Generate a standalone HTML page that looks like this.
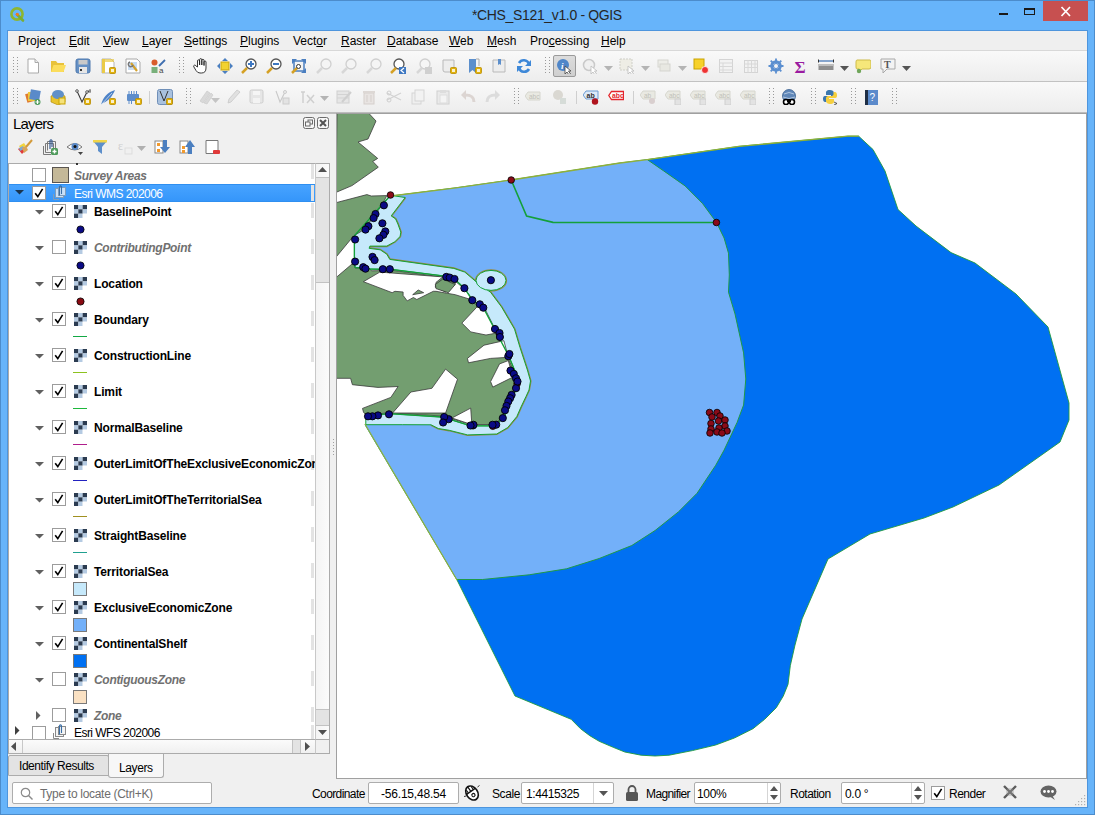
<!DOCTYPE html>
<html><head><meta charset="utf-8"><style>
html,body{margin:0;padding:0;}
body{width:1095px;height:815px;overflow:hidden;position:relative;background:#67B4FA;font-family:"Liberation Sans", sans-serif;}
div{box-sizing:border-box;}
u{text-decoration:underline;text-underline-offset:1px;}
</style></head><body>
<div style="position:absolute;left:0px;top:0px;width:1095px;height:815px;border:1px solid #4C8CCB;"></div><div style="position:absolute;left:7px;top:30px;width:1081px;height:778px;background:#F0F0F0;border:1px solid #4E95DD;"></div><svg style="position:absolute;left:9px;top:6px;" width="18" height="18" viewBox="0 0 18 18"><circle cx="8" cy="8" r="5.6" fill="none" stroke="#8DB631" stroke-width="2.6"/><line x1="8" y1="8.5" x2="14" y2="14.5" stroke="#79AE34" stroke-width="2.6" stroke-linecap="round"/><circle cx="8.3" cy="8.3" r="1.6" fill="#F07D1E"/></svg><div style="position:absolute;left:472px;top:7px;font-size:14px;line-height:17px;color:#262626;white-space:nowrap;letter-spacing:-0.35px;">*CHS_S121_v1.0 - QGIS</div><div style="position:absolute;left:999px;top:13px;width:9px;height:2px;background:#1a1a1a;"></div><div style="position:absolute;left:1024px;top:8px;width:11px;height:7px;border:1px solid #1a1a1a;border-top-width:2px;"></div><div style="position:absolute;left:1043px;top:1px;width:45px;height:20px;background:#C75050;"></div><svg style="position:absolute;left:1060px;top:6px;" width="12" height="11" viewBox="0 0 12 11"><path d="M1.5 1 L10 10 M10 1 L1.5 10" stroke="#fff" stroke-width="1.7"/></svg><div style="position:absolute;left:8px;top:31px;width:1079px;height:19px;background:#EFEFEF;"></div><div style="position:absolute;left:8px;top:50px;width:1079px;height:1px;background:#D8D8D8;"></div><div style="position:absolute;left:18px;top:34px;font-size:12px;line-height:14px;color:#000;white-space:nowrap;">Pro<u>j</u>ect</div><div style="position:absolute;left:69px;top:34px;font-size:12px;line-height:14px;color:#000;white-space:nowrap;"><u>E</u>dit</div><div style="position:absolute;left:103px;top:34px;font-size:12px;line-height:14px;color:#000;white-space:nowrap;"><u>V</u>iew</div><div style="position:absolute;left:142px;top:34px;font-size:12px;line-height:14px;color:#000;white-space:nowrap;"><u>L</u>ayer</div><div style="position:absolute;left:184px;top:34px;font-size:12px;line-height:14px;color:#000;white-space:nowrap;"><u>S</u>ettings</div><div style="position:absolute;left:240px;top:34px;font-size:12px;line-height:14px;color:#000;white-space:nowrap;"><u>P</u>lugins</div><div style="position:absolute;left:293px;top:34px;font-size:12px;line-height:14px;color:#000;white-space:nowrap;">Vect<u>o</u>r</div><div style="position:absolute;left:341px;top:34px;font-size:12px;line-height:14px;color:#000;white-space:nowrap;"><u>R</u>aster</div><div style="position:absolute;left:387px;top:34px;font-size:12px;line-height:14px;color:#000;white-space:nowrap;"><u>D</u>atabase</div><div style="position:absolute;left:449px;top:34px;font-size:12px;line-height:14px;color:#000;white-space:nowrap;"><u>W</u>eb</div><div style="position:absolute;left:487px;top:34px;font-size:12px;line-height:14px;color:#000;white-space:nowrap;"><u>M</u>esh</div><div style="position:absolute;left:530px;top:34px;font-size:12px;line-height:14px;color:#000;white-space:nowrap;">Pro<u>c</u>essing</div><div style="position:absolute;left:601px;top:34px;font-size:12px;line-height:14px;color:#000;white-space:nowrap;"><u>H</u>elp</div><div style="position:absolute;left:8px;top:51px;width:1079px;height:30px;background:linear-gradient(#F9F9F9,#EDEDED);"></div><div style="position:absolute;left:8px;top:81px;width:1079px;height:1px;background:#C2C2C2;"></div><div style="position:absolute;left:8px;top:82px;width:1079px;height:30px;background:linear-gradient(#F9F9F9,#EDEDED);"></div><div style="position:absolute;left:8px;top:112px;width:1079px;height:2px;background:#BDBDBD;"></div><svg style="position:absolute;left:13px;top:57px;" width="5" height="18" viewBox="0 0 5 18"><rect x="0" y="0" width="1" height="1" fill="#9A9A9A"/><rect x="4" y="0" width="1" height="1" fill="#9A9A9A"/><rect x="0" y="3" width="1" height="1" fill="#9A9A9A"/><rect x="4" y="3" width="1" height="1" fill="#9A9A9A"/><rect x="0" y="6" width="1" height="1" fill="#9A9A9A"/><rect x="4" y="6" width="1" height="1" fill="#9A9A9A"/><rect x="0" y="9" width="1" height="1" fill="#9A9A9A"/><rect x="4" y="9" width="1" height="1" fill="#9A9A9A"/><rect x="0" y="12" width="1" height="1" fill="#9A9A9A"/><rect x="4" y="12" width="1" height="1" fill="#9A9A9A"/><rect x="0" y="15" width="1" height="1" fill="#9A9A9A"/><rect x="4" y="15" width="1" height="1" fill="#9A9A9A"/></svg><svg style="position:absolute;left:25px;top:58px;" width="16" height="16" viewBox="0 0 16 16"><path d="M3 1 H10 L13.5 4.5 V15 H3 Z" fill="#fff" stroke="#A9A9A9"/><path d="M10 1 V4.5 H13.5" fill="#eee" stroke="#A9A9A9"/></svg><svg style="position:absolute;left:50px;top:58px;" width="16" height="16" viewBox="0 0 16 16"><path d="M1 3 H6 L7.5 5 H14 V14 H1 Z" fill="#E8C23A"/><path d="M1 14 L3.5 7 H16 L13.5 14 Z" fill="#FBDD5C"/></svg><svg style="position:absolute;left:75px;top:58px;" width="16" height="16" viewBox="0 0 16 16"><rect x="1" y="1" width="14" height="14" rx="2" fill="#6590C4" stroke="#4E79AE"/><rect x="3.5" y="2" width="9" height="4.5" fill="#C9C9C9"/><rect x="4" y="9" width="8" height="6" fill="#E6E6E6"/><rect x="5" y="11" width="2" height="2" fill="#333"/></svg><svg style="position:absolute;left:100px;top:58px;" width="16" height="16" viewBox="0 0 16 16"><path d="M2 1 H11 L14 4 V15 H2 Z" fill="#fff" stroke="#B5B5B5"/><rect x="2" y="1" width="3" height="14" fill="#EACB47"/><rect x="2" y="1" width="12" height="3" fill="#EACB47" opacity="0.7"/><rect x="9.5" y="9.5" width="6" height="6" rx="1" fill="#E2B20A" stroke="#B88A00" stroke-width="0.8"/><rect x="11" y="11" width="3" height="3" fill="#fff" opacity="0.8"/></svg><svg style="position:absolute;left:125px;top:58px;" width="16" height="16" viewBox="0 0 16 16"><path d="M1 1 H12 L15 4 V15 H1 Z" fill="#fff" stroke="#A9A9A9"/><rect x="3" y="4" width="9" height="8" fill="#C8DCF2"/><path d="M6 5 L12 13" stroke="#D4A22D" stroke-width="2.2"/><path d="M5 4 A2.4 2.4 0 1 0 8 7" fill="none" stroke="#777" stroke-width="1.5"/></svg><svg style="position:absolute;left:150px;top:58px;" width="16" height="16" viewBox="0 0 16 16"><circle cx="4.5" cy="4.5" r="3" fill="#D95C2B"/><rect x="1.5" y="9" width="6" height="6" fill="#79B07A"/><path d="M9 8 L15 2" stroke="#3F6FB0" stroke-width="1.8"/><text x="9" y="15" font-size="8" font-family="Liberation Sans" fill="#444">a</text></svg><svg style="position:absolute;left:179px;top:57px;" width="5" height="18" viewBox="0 0 5 18"><rect x="0" y="0" width="1" height="1" fill="#9A9A9A"/><rect x="4" y="0" width="1" height="1" fill="#9A9A9A"/><rect x="0" y="3" width="1" height="1" fill="#9A9A9A"/><rect x="4" y="3" width="1" height="1" fill="#9A9A9A"/><rect x="0" y="6" width="1" height="1" fill="#9A9A9A"/><rect x="4" y="6" width="1" height="1" fill="#9A9A9A"/><rect x="0" y="9" width="1" height="1" fill="#9A9A9A"/><rect x="4" y="9" width="1" height="1" fill="#9A9A9A"/><rect x="0" y="12" width="1" height="1" fill="#9A9A9A"/><rect x="4" y="12" width="1" height="1" fill="#9A9A9A"/><rect x="0" y="15" width="1" height="1" fill="#9A9A9A"/><rect x="4" y="15" width="1" height="1" fill="#9A9A9A"/></svg><svg style="position:absolute;left:192px;top:58px;" width="16" height="16" viewBox="0 0 16 16"><path d="M5.5 9 V3 Q5.5 1.8 6.6 1.8 Q7.6 1.8 7.6 3 V7 V1.8 Q7.6 0.6 8.7 0.6 Q9.8 0.6 9.8 1.8 V7 V2.5 Q9.8 1.3 10.9 1.3 Q12 1.3 12 2.5 V7.5 V4 Q12 3 13 3 Q14 3 14 4 V10 Q14 15 9.5 15 H8 Q5.5 15 4 12.5 L1.8 8.8 Q1.2 7.6 2.3 7.2 Q3.3 6.9 4 8 Z" fill="#fff" stroke="#222" stroke-width="0.9"/></svg><svg style="position:absolute;left:217px;top:58px;" width="16" height="16" viewBox="0 0 16 16"><rect x="4" y="4" width="8" height="8" fill="#F2D230" stroke="#C7A510"/><path d="M8 0 L11 3 H5 Z M8 16 L5 13 H11 Z M0 8 L3 5 V11 Z M16 8 L13 11 V5 Z" fill="#4B7FC0"/></svg><svg style="position:absolute;left:241px;top:58px;" width="16" height="16" viewBox="0 0 16 16"><circle cx="10" cy="6" r="5" fill="#fff" stroke="#555" stroke-width="1.3"/><path d="M7 6 H13 M10 3 V9" stroke="#3E78C2" stroke-width="2"/><path d="M1 15 L6 10" stroke="#D5A125" stroke-width="2.5"/></svg><svg style="position:absolute;left:266px;top:58px;" width="16" height="16" viewBox="0 0 16 16"><circle cx="10" cy="6" r="5" fill="#fff" stroke="#555" stroke-width="1.3"/><path d="M7 6 H13" stroke="#3E78C2" stroke-width="2"/><path d="M1 15 L6 10" stroke="#D5A125" stroke-width="2.5"/></svg><svg style="position:absolute;left:291px;top:58px;" width="16" height="16" viewBox="0 0 16 16"><path d="M1 1 H6 L1 6 Z M15 1 H10 L15 6 Z M15 15 H10 L15 10 Z" fill="#4B7FC0"/><rect x="3" y="3" width="10" height="10" fill="none" stroke="#4B7FC0" stroke-width="1.5"/><path d="M1 15 L6 10" stroke="#D5A125" stroke-width="2.5"/><circle cx="7.5" cy="8.5" r="2" fill="#fff" stroke="#333"/></svg><svg style="position:absolute;left:316px;top:58px;" width="16" height="16" viewBox="0 0 16 16"><circle cx="10" cy="6" r="5" fill="#F4F4F4" stroke="#CFCFCF" stroke-width="1.3"/><path d="M1 15 L6 10" stroke="#D7D7D7" stroke-width="2.5"/></svg><svg style="position:absolute;left:341px;top:58px;" width="16" height="16" viewBox="0 0 16 16"><circle cx="10" cy="6" r="5" fill="#F4F4F4" stroke="#CFCFCF" stroke-width="1.3"/><path d="M1 15 L6 10" stroke="#D7D7D7" stroke-width="2.5"/></svg><svg style="position:absolute;left:366px;top:58px;" width="16" height="16" viewBox="0 0 16 16"><circle cx="10" cy="6" r="5" fill="#F4F4F4" stroke="#CFCFCF" stroke-width="1.3"/><path d="M1 15 L6 10" stroke="#D7D7D7" stroke-width="2.5"/></svg><svg style="position:absolute;left:390px;top:58px;" width="16" height="16" viewBox="0 0 16 16"><circle cx="9" cy="6" r="5" fill="#fff" stroke="#555" stroke-width="1.3"/><path d="M1 15 L6 10" stroke="#D5A125" stroke-width="2.5"/><rect x="9" y="9" width="7" height="7" fill="#3E78C2"/><path d="M14 10 L11 12.5 L14 15" stroke="#fff" fill="none" stroke-width="1.2"/></svg><svg style="position:absolute;left:416px;top:58px;" width="16" height="16" viewBox="0 0 16 16"><circle cx="9" cy="6" r="5" fill="#F6F6F6" stroke="#CFCFCF" stroke-width="1.3"/><path d="M1 15 L6 10" stroke="#D7D7D7" stroke-width="2.5"/><rect x="9" y="9" width="7" height="7" fill="#D0D0D0"/></svg><svg style="position:absolute;left:441px;top:58px;" width="16" height="16" viewBox="0 0 16 16"><path d="M2 2 H13 V14 H4 A2 2 0 0 1 2 12 Z" fill="#EDEDED" stroke="#B9B9B9"/><rect x="9.5" y="9.5" width="6" height="6" rx="1" fill="#E2B20A" stroke="#B88A00" stroke-width="0.8"/><rect x="11" y="11" width="3" height="3" fill="#fff" opacity="0.8"/></svg><svg style="position:absolute;left:466px;top:58px;" width="16" height="16" viewBox="0 0 16 16"><path d="M3 1 H10 V15 L6.5 12 L3 15 Z" fill="#5C8FCC"/><path d="M10 1 H13 V8" fill="none" stroke="#AAA"/><rect x="9.5" y="9.5" width="6" height="6" rx="1" fill="#E2B20A" stroke="#B88A00" stroke-width="0.8"/><rect x="11" y="11" width="3" height="3" fill="#fff" opacity="0.8"/></svg><svg style="position:absolute;left:491px;top:58px;" width="16" height="16" viewBox="0 0 16 16"><path d="M2 2 H14 V14 H2 Z" fill="#EDEDED" stroke="#B9B9B9"/><path d="M7 1 H10 V7 L8.5 6 L7 7 Z" fill="#5C8FCC"/></svg><svg style="position:absolute;left:516px;top:58px;" width="16" height="16" viewBox="0 0 16 16"><path d="M13 6 A5.5 5.5 0 0 0 3 5" fill="none" stroke="#3E88D8" stroke-width="2.6"/><path d="M3 10 A5.5 5.5 0 0 0 13 11" fill="none" stroke="#3E88D8" stroke-width="2.6"/><path d="M15 2 V8 H9 Z M1 14 V8 H7 Z" fill="#3E88D8"/></svg><svg style="position:absolute;left:545px;top:57px;" width="5" height="18" viewBox="0 0 5 18"><rect x="0" y="0" width="1" height="1" fill="#9A9A9A"/><rect x="4" y="0" width="1" height="1" fill="#9A9A9A"/><rect x="0" y="3" width="1" height="1" fill="#9A9A9A"/><rect x="4" y="3" width="1" height="1" fill="#9A9A9A"/><rect x="0" y="6" width="1" height="1" fill="#9A9A9A"/><rect x="4" y="6" width="1" height="1" fill="#9A9A9A"/><rect x="0" y="9" width="1" height="1" fill="#9A9A9A"/><rect x="4" y="9" width="1" height="1" fill="#9A9A9A"/><rect x="0" y="12" width="1" height="1" fill="#9A9A9A"/><rect x="4" y="12" width="1" height="1" fill="#9A9A9A"/><rect x="0" y="15" width="1" height="1" fill="#9A9A9A"/><rect x="4" y="15" width="1" height="1" fill="#9A9A9A"/></svg><div style="position:absolute;left:553px;top:55px;width:23px;height:22px;background:linear-gradient(#DCDCDC,#CFCFCF);border:1px solid #9A9A9A;border-radius:2px;"></div><svg style="position:absolute;left:556px;top:58px;" width="16" height="16" viewBox="0 0 16 16"><circle cx="7" cy="7" r="6" fill="#4F86C9"/><text x="5" y="11" font-size="9" font-weight="bold" font-style="italic" font-family="Liberation Serif" fill="#fff">i</text><path d="M9 8 L9 16 L11 14 L13 17 L14.5 16 L12.5 13 L15 13 Z" fill="#fff" stroke="#444" stroke-width="0.8"/></svg><svg style="position:absolute;left:582px;top:58px;" width="16" height="16" viewBox="0 0 16 16"><circle cx="7" cy="7" r="5.5" fill="#F0F0F0" stroke="#CACACA" stroke-width="1.5"/><path d="M9 8 L9 16 L11 14 L13 17 L14.5 16 L12.5 13 L15 13 Z" fill="#fff" stroke="#BBB" stroke-width="0.8"/></svg><svg style="position:absolute;left:619px;top:58px;" width="16" height="16" viewBox="0 0 16 16"><rect x="1" y="1" width="12" height="11" fill="#EEEDE5" stroke="#CFCFC8" stroke-dasharray="2 1"/><path d="M9 8 L9 16 L11 14 L13 17 L14.5 16 L12.5 13 L15 13 Z" fill="#fff" stroke="#BBB" stroke-width="0.8"/></svg><svg style="position:absolute;left:656px;top:58px;" width="16" height="16" viewBox="0 0 16 16"><rect x="2" y="2" width="10" height="7" fill="#EDEDE8" stroke="#D5D5D0"/><rect x="4" y="6" width="10" height="7" fill="#E8E8E2" stroke="#D5D5D0"/></svg><svg style="position:absolute;left:693px;top:58px;" width="16" height="16" viewBox="0 0 16 16"><rect x="1" y="1" width="10" height="10" fill="#F7D12A" stroke="#C9A300"/><circle cx="12" cy="12" r="3.5" fill="#E33" stroke="#fff" stroke-width="0.8"/></svg><svg style="position:absolute;left:718px;top:58px;" width="16" height="16" viewBox="0 0 16 16"><rect x="1.5" y="1.5" width="13" height="13" fill="#F2F2F2" stroke="#D4D4D4"/><path d="M1.5 5 H14.5 M1.5 8.5 H14.5 M1.5 12 H14.5 M5 5 V14.5" stroke="#D8D8D8"/></svg><svg style="position:absolute;left:743px;top:58px;" width="16" height="16" viewBox="0 0 16 16"><rect x="1.5" y="2.5" width="13" height="12" fill="#F2F2F2" stroke="#D4D4D4"/><path d="M1.5 6 H14.5 M1.5 9.5 H14.5 M5 2 V14.5 M8.5 2 V14.5 M12 2 V14.5" stroke="#D8D8D8"/></svg><svg style="position:absolute;left:768px;top:58px;" width="16" height="16" viewBox="0 0 16 16"><circle cx="8" cy="8" r="4.5" fill="none" stroke="#5B8FD0" stroke-width="2.6"/><path d="M8 0.5 V15.5 M0.5 8 H15.5 M2.7 2.7 L13.3 13.3 M13.3 2.7 L2.7 13.3" stroke="#5B8FD0" stroke-width="1.8"/><circle cx="8" cy="8" r="2" fill="#F3F3F3"/></svg><svg style="position:absolute;left:793px;top:58px;" width="16" height="16" viewBox="0 0 16 16"><text x="1.5" y="14.5" font-size="17" font-weight="bold" font-family="Liberation Serif" fill="#9A1BA0">&#931;</text></svg><svg style="position:absolute;left:818px;top:58px;" width="16" height="16" viewBox="0 0 16 16"><rect x="0.5" y="6" width="15" height="6" fill="#8E8E8E"/><rect x="0.5" y="6" width="15" height="2" fill="#BDBDBD"/><path d="M0.5 3 H15.5" stroke="#3A6DB0" stroke-width="1.2"/><path d="M0.5 1.5 V4.5 M15.5 1.5 V4.5" stroke="#333"/></svg><svg style="position:absolute;left:855px;top:58px;" width="16" height="16" viewBox="0 0 16 16"><path d="M2 2 H15 Q16 2 16 4 V9 Q16 11 14 11 H7 L4 14 V11 H2 Q1 11 1 9 V4 Q1 2 2 2 Z" fill="#F6E77A" stroke="#CDBB4A"/><circle cx="4" cy="13" r="2.2" fill="#6FA55A"/></svg><svg style="position:absolute;left:880px;top:58px;" width="16" height="16" viewBox="0 0 16 16"><path d="M1 1 H15 V11 H7 L3 15 V11 H1 Z" fill="#F3F3F3" stroke="#A9A9A9"/><text x="4" y="10" font-size="10" font-weight="bold" font-family="Liberation Serif" fill="#555">T</text></svg><svg style="position:absolute;left:604px;top:66px;" width="9" height="5" viewBox="0 0 9 5"><path d="M0 0 L9 0 L4.5 5 Z" fill="#B4B4B4"/></svg><svg style="position:absolute;left:641px;top:66px;" width="9" height="5" viewBox="0 0 9 5"><path d="M0 0 L9 0 L4.5 5 Z" fill="#B4B4B4"/></svg><svg style="position:absolute;left:678px;top:66px;" width="9" height="5" viewBox="0 0 9 5"><path d="M0 0 L9 0 L4.5 5 Z" fill="#B4B4B4"/></svg><svg style="position:absolute;left:840px;top:66px;" width="9" height="5" viewBox="0 0 9 5"><path d="M0 0 L9 0 L4.5 5 Z" fill="#555"/></svg><svg style="position:absolute;left:902px;top:66px;" width="9" height="5" viewBox="0 0 9 5"><path d="M0 0 L9 0 L4.5 5 Z" fill="#555"/></svg><svg style="position:absolute;left:13px;top:88px;" width="5" height="18" viewBox="0 0 5 18"><rect x="0" y="0" width="1" height="1" fill="#9A9A9A"/><rect x="4" y="0" width="1" height="1" fill="#9A9A9A"/><rect x="0" y="3" width="1" height="1" fill="#9A9A9A"/><rect x="4" y="3" width="1" height="1" fill="#9A9A9A"/><rect x="0" y="6" width="1" height="1" fill="#9A9A9A"/><rect x="4" y="6" width="1" height="1" fill="#9A9A9A"/><rect x="0" y="9" width="1" height="1" fill="#9A9A9A"/><rect x="4" y="9" width="1" height="1" fill="#9A9A9A"/><rect x="0" y="12" width="1" height="1" fill="#9A9A9A"/><rect x="4" y="12" width="1" height="1" fill="#9A9A9A"/><rect x="0" y="15" width="1" height="1" fill="#9A9A9A"/><rect x="4" y="15" width="1" height="1" fill="#9A9A9A"/></svg><svg style="position:absolute;left:25px;top:89px;" width="16" height="16" viewBox="0 0 16 16"><rect x="1" y="4" width="9" height="9" transform="rotate(-15 5 8)" fill="#E07A2E"/><rect x="3" y="3" width="9" height="9" fill="#EFC63A"/><rect x="5" y="1" width="10" height="10" transform="rotate(10 10 6)" fill="#5A8AC9"/><circle cx="12.5" cy="13" r="3" fill="#4E9A5B"/><path d="M12.5 11 V15 M10.5 13 H14.5" stroke="#fff" stroke-width="1.2"/></svg><svg style="position:absolute;left:50px;top:89px;" width="16" height="16" viewBox="0 0 16 16"><path d="M1 7 L8 4 L15 7 V13 L8 16 L1 13 Z" fill="#E9C42D" stroke="#A98400" stroke-width="0.6"/><ellipse cx="8" cy="5.5" rx="6" ry="4.5" fill="#6090C8"/><rect x="9" y="9" width="6" height="6" fill="#F5E27A" stroke="#C9A300"/></svg><svg style="position:absolute;left:75px;top:89px;" width="16" height="16" viewBox="0 0 16 16"><path d="M2 2 L7 13 L12 3 L15 2" fill="none" stroke="#3B3B3B" stroke-width="1.1"/><circle cx="2" cy="2" r="1.3" fill="#fff" stroke="#333" stroke-width="0.8"/><circle cx="12" cy="3" r="1.3" fill="#fff" stroke="#333" stroke-width="0.8"/><circle cx="15" cy="2" r="1.2" fill="#fff" stroke="#333" stroke-width="0.8"/><rect x="9.5" y="9.5" width="6" height="6" rx="1" fill="#E2B20A" stroke="#B88A00" stroke-width="0.8"/><rect x="11" y="11" width="3" height="3" fill="#fff" opacity="0.8"/></svg><svg style="position:absolute;left:100px;top:89px;" width="16" height="16" viewBox="0 0 16 16"><path d="M1 16 C3 8 8 3 15 1 C13 6 9 12 3 14 Z" fill="#4E83C7"/><path d="M1 16 L12 4" stroke="#fff" stroke-width="0.6"/><rect x="9.5" y="9.5" width="6" height="6" rx="1" fill="#E2B20A" stroke="#B88A00" stroke-width="0.8"/><rect x="11" y="11" width="3" height="3" fill="#fff" opacity="0.8"/></svg><svg style="position:absolute;left:126px;top:89px;" width="16" height="16" viewBox="0 0 16 16"><rect x="1" y="5" width="12" height="7" rx="1" fill="#5D8DCB"/><path d="M3 2 V5 M5.5 2 V5 M8 2 V5 M10.5 2 V5 M3 12 V15 M5.5 12 V15" stroke="#5D8DCB" stroke-width="1"/><rect x="9.5" y="9.5" width="6" height="6" rx="1" fill="#E2B20A" stroke="#B88A00" stroke-width="0.8"/><rect x="11" y="11" width="3" height="3" fill="#fff" opacity="0.8"/></svg><svg style="position:absolute;left:157px;top:89px;" width="16" height="16" viewBox="0 0 16 16"><rect x="0.5" y="0.5" width="15" height="15" rx="2" fill="#A9C1DE" stroke="#6F8FB8"/><path d="M3 2 L7 12 L11 2" fill="none" stroke="#333" stroke-width="1"/><rect x="9.5" y="9.5" width="6" height="6" rx="1" fill="#E2B20A" stroke="#B88A00" stroke-width="0.8"/><rect x="11" y="11" width="3" height="3" fill="#fff" opacity="0.8"/></svg><div style="position:absolute;left:149px;top:91px;width:1px;height:13px;background:#CFCFCF;"></div><svg style="position:absolute;left:186px;top:88px;" width="5" height="18" viewBox="0 0 5 18"><rect x="0" y="0" width="1" height="1" fill="#9A9A9A"/><rect x="4" y="0" width="1" height="1" fill="#9A9A9A"/><rect x="0" y="3" width="1" height="1" fill="#9A9A9A"/><rect x="4" y="3" width="1" height="1" fill="#9A9A9A"/><rect x="0" y="6" width="1" height="1" fill="#9A9A9A"/><rect x="4" y="6" width="1" height="1" fill="#9A9A9A"/><rect x="0" y="9" width="1" height="1" fill="#9A9A9A"/><rect x="4" y="9" width="1" height="1" fill="#9A9A9A"/><rect x="0" y="12" width="1" height="1" fill="#9A9A9A"/><rect x="4" y="12" width="1" height="1" fill="#9A9A9A"/><rect x="0" y="15" width="1" height="1" fill="#9A9A9A"/><rect x="4" y="15" width="1" height="1" fill="#9A9A9A"/></svg><svg style="position:absolute;left:199px;top:89px;" width="16" height="16" viewBox="0 0 16 16"><path d="M1 12 L8 2 L11 4 L4 14 Z M5 14 L12 4 L14 6 L8 15 Z" fill="#D9D9D9" stroke="#C8C8C8" stroke-width="0.6"/></svg><svg style="position:absolute;left:225px;top:89px;" width="16" height="16" viewBox="0 0 16 16"><path d="M3 14 L4 10 L12 1 L15 3 L6 13 Z" fill="#E0E0E0" stroke="#C8C8C8" stroke-width="0.8"/></svg><svg style="position:absolute;left:249px;top:89px;" width="16" height="16" viewBox="0 0 16 16"><rect x="1" y="1" width="13" height="13" rx="1.5" fill="#E6E6E6" stroke="#CDCDCD"/><rect x="4" y="2" width="7" height="4" fill="#F5F5F5"/><rect x="4" y="9" width="7" height="5" fill="#F3F3F3"/></svg><svg style="position:absolute;left:274px;top:89px;" width="16" height="16" viewBox="0 0 16 16"><path d="M2 2 L6 13 L11 3" fill="none" stroke="#C9C9C9" stroke-width="1.1"/><circle cx="11" cy="3" r="1.5" fill="#eee" stroke="#CCC"/><rect x="9" y="9" width="6" height="6" fill="#E3E3E3" stroke="#CCC"/></svg><svg style="position:absolute;left:299px;top:89px;" width="16" height="16" viewBox="0 0 16 16"><path d="M2 3 L6 3 M4 3 L4 14 M8 6 L15 14 M15 6 L8 14" stroke="#CFCFCF" stroke-width="1.5" fill="none"/></svg><svg style="position:absolute;left:336px;top:89px;" width="16" height="16" viewBox="0 0 16 16"><rect x="1" y="2" width="12" height="12" fill="#E6E6E6" stroke="#D0D0D0"/><path d="M1 5.5 H13 M1 9 H13" stroke="#D3D3D3"/><path d="M6 13 L15 3" stroke="#CFCFCF" stroke-width="2"/></svg><svg style="position:absolute;left:361px;top:89px;" width="16" height="16" viewBox="0 0 16 16"><rect x="3" y="4" width="10" height="11" fill="#E8E4E2" stroke="#D5CFCC"/><rect x="2" y="2" width="12" height="2" fill="#DDD8D5"/><path d="M6 6 V13 M10 6 V13" stroke="#D5CFCC"/></svg><svg style="position:absolute;left:386px;top:89px;" width="16" height="16" viewBox="0 0 16 16"><path d="M1 4 L15 11 M1 11 L15 4" stroke="#D2D2D2" stroke-width="1.2"/><circle cx="3" cy="4" r="2" fill="none" stroke="#CFCFCF"/><circle cx="3" cy="11" r="2" fill="none" stroke="#CFCFCF"/></svg><svg style="position:absolute;left:410px;top:89px;" width="16" height="16" viewBox="0 0 16 16"><rect x="2" y="4" width="9" height="11" fill="#EFEFEF" stroke="#D5D5D5"/><rect x="5" y="1" width="9" height="11" fill="#F2F2F2" stroke="#D5D5D5"/></svg><svg style="position:absolute;left:435px;top:89px;" width="16" height="16" viewBox="0 0 16 16"><rect x="2" y="2" width="12" height="13" fill="#EAEAEA" stroke="#D0D0D0"/><rect x="5" y="1" width="6" height="3" fill="#DDD"/><rect x="5" y="6" width="7" height="8" fill="#F4F4F4" stroke="#DDD"/></svg><svg style="position:absolute;left:460px;top:89px;" width="16" height="16" viewBox="0 0 16 16"><path d="M14 13 C14 7 10 6 5 6" fill="none" stroke="#DCD5D2" stroke-width="3"/><path d="M1 6 L6 1 V11 Z" fill="#DCD5D2"/></svg><svg style="position:absolute;left:485px;top:89px;" width="16" height="16" viewBox="0 0 16 16"><path d="M2 13 C2 7 6 6 11 6" fill="none" stroke="#DCDCDC" stroke-width="3"/><path d="M15 6 L10 1 V11 Z" fill="#DCDCDC"/></svg><svg style="position:absolute;left:211px;top:98px;" width="9" height="5" viewBox="0 0 9 5"><path d="M0 0 L9 0 L4.5 5 Z" fill="#C4C4C4"/></svg><svg style="position:absolute;left:320px;top:96px;" width="9" height="5" viewBox="0 0 9 5"><path d="M0 0 L9 0 L4.5 5 Z" fill="#B4B4B4"/></svg><svg style="position:absolute;left:514px;top:88px;" width="5" height="18" viewBox="0 0 5 18"><rect x="0" y="0" width="1" height="1" fill="#9A9A9A"/><rect x="4" y="0" width="1" height="1" fill="#9A9A9A"/><rect x="0" y="3" width="1" height="1" fill="#9A9A9A"/><rect x="4" y="3" width="1" height="1" fill="#9A9A9A"/><rect x="0" y="6" width="1" height="1" fill="#9A9A9A"/><rect x="4" y="6" width="1" height="1" fill="#9A9A9A"/><rect x="0" y="9" width="1" height="1" fill="#9A9A9A"/><rect x="4" y="9" width="1" height="1" fill="#9A9A9A"/><rect x="0" y="12" width="1" height="1" fill="#9A9A9A"/><rect x="4" y="12" width="1" height="1" fill="#9A9A9A"/><rect x="0" y="15" width="1" height="1" fill="#9A9A9A"/><rect x="4" y="15" width="1" height="1" fill="#9A9A9A"/></svg><svg style="position:absolute;left:525px;top:89px;" width="16" height="16" viewBox="0 0 16 16"><path d="M3 3 H15 V11 H3 L0 7 Z" fill="#E9E9E2" stroke="#D6D6CE"/><text x="4" y="10" font-size="6.5" font-family="Liberation Sans" fill="#BFBFB8">abc</text></svg><svg style="position:absolute;left:551px;top:89px;" width="16" height="16" viewBox="0 0 16 16"><circle cx="7" cy="6" r="5" fill="#DAD8D2"/><rect x="9" y="9" width="6" height="6" fill="#D6DCD8"/></svg><svg style="position:absolute;left:583px;top:89px;" width="16" height="16" viewBox="0 0 16 16"><path d="M3 2 H15 V10 H3 L0 6 Z" fill="#DDE9F7" stroke="#6B9BD2"/><text x="3.5" y="9" font-size="7" font-weight="bold" font-family="Liberation Sans" fill="#333">ab</text><circle cx="12" cy="12.5" r="3.2" fill="#B0141E"/></svg><svg style="position:absolute;left:608px;top:89px;" width="16" height="16" viewBox="0 0 16 16"><path d="M3.5 2.5 H15.5 V10.5 H3.5 L0.8 6.5 Z" fill="#fff" stroke="#E4262C" stroke-width="1.3"/><text x="4" y="9.2" font-size="6.8" font-weight="bold" font-family="Liberation Sans" fill="#E4262C">abc</text></svg><svg style="position:absolute;left:640px;top:89px;" width="16" height="16" viewBox="0 0 16 16"><path d="M3 2 H15 V10 H3 L0 6 Z" fill="#E9E9E2" stroke="#D6D6CE"/><text x="4" y="9" font-size="6.5" font-family="Liberation Sans" fill="#BFBFB8">ab</text><circle cx="12" cy="12" r="3" fill="#D9CFCF"/></svg><svg style="position:absolute;left:665px;top:89px;" width="16" height="16" viewBox="0 0 16 16"><path d="M3 2 H15 V10 H3 L0 6 Z" fill="#E9E9E2" stroke="#D6D6CE"/><text x="4" y="9" font-size="6.5" font-family="Liberation Sans" fill="#BFBFB8">abc</text><rect x="10" y="10" width="6" height="6" fill="#E3E3E3" stroke="#CFCFCF"/></svg><svg style="position:absolute;left:690px;top:89px;" width="16" height="16" viewBox="0 0 16 16"><path d="M3 2 H15 V10 H3 L0 6 Z" fill="#E9E9E2" stroke="#D6D6CE"/><text x="4" y="9" font-size="6.5" font-family="Liberation Sans" fill="#BFBFB8">abc</text><rect x="10" y="10" width="6" height="6" fill="#E3E3E3" stroke="#CFCFCF"/></svg><svg style="position:absolute;left:715px;top:89px;" width="16" height="16" viewBox="0 0 16 16"><path d="M3 2 H15 V10 H3 L0 6 Z" fill="#E9E9E2" stroke="#D6D6CE"/><text x="4" y="9" font-size="6.5" font-family="Liberation Sans" fill="#BFBFB8">abc</text><rect x="10" y="10" width="6" height="6" fill="#E3E3E3" stroke="#CFCFCF"/></svg><svg style="position:absolute;left:740px;top:89px;" width="16" height="16" viewBox="0 0 16 16"><path d="M3 2 H15 V10 H3 L0 6 Z" fill="#E9E9E2" stroke="#D6D6CE"/><text x="4" y="9" font-size="6.5" font-family="Liberation Sans" fill="#BFBFB8">abc</text><rect x="10" y="10" width="6" height="6" fill="#E3E3E3" stroke="#CFCFCF"/></svg><div style="position:absolute;left:576px;top:91px;width:1px;height:13px;background:#CFCFCF;"></div><div style="position:absolute;left:633px;top:91px;width:1px;height:13px;background:#CFCFCF;"></div><svg style="position:absolute;left:769px;top:88px;" width="5" height="18" viewBox="0 0 5 18"><rect x="0" y="0" width="1" height="1" fill="#9A9A9A"/><rect x="4" y="0" width="1" height="1" fill="#9A9A9A"/><rect x="0" y="3" width="1" height="1" fill="#9A9A9A"/><rect x="4" y="3" width="1" height="1" fill="#9A9A9A"/><rect x="0" y="6" width="1" height="1" fill="#9A9A9A"/><rect x="4" y="6" width="1" height="1" fill="#9A9A9A"/><rect x="0" y="9" width="1" height="1" fill="#9A9A9A"/><rect x="4" y="9" width="1" height="1" fill="#9A9A9A"/><rect x="0" y="12" width="1" height="1" fill="#9A9A9A"/><rect x="4" y="12" width="1" height="1" fill="#9A9A9A"/><rect x="0" y="15" width="1" height="1" fill="#9A9A9A"/><rect x="4" y="15" width="1" height="1" fill="#9A9A9A"/></svg><svg style="position:absolute;left:781px;top:89px;" width="16" height="16" viewBox="0 0 16 16"><circle cx="8" cy="7" r="6.5" fill="#5F87B8" stroke="#3A5F8E" stroke-width="0.8"/><path d="M3 5 Q8 2 13 5 M2 8 Q8 11 14 8" stroke="#C8D7EA" fill="none" stroke-width="0.8"/><circle cx="5" cy="13" r="2.5" fill="#fff" stroke="#000" stroke-width="1.6"/><circle cx="11" cy="13" r="2.5" fill="#fff" stroke="#000" stroke-width="1.6"/><rect x="6" y="10" width="4" height="3" fill="#000"/></svg><svg style="position:absolute;left:811px;top:88px;" width="5" height="18" viewBox="0 0 5 18"><rect x="0" y="0" width="1" height="1" fill="#9A9A9A"/><rect x="4" y="0" width="1" height="1" fill="#9A9A9A"/><rect x="0" y="3" width="1" height="1" fill="#9A9A9A"/><rect x="4" y="3" width="1" height="1" fill="#9A9A9A"/><rect x="0" y="6" width="1" height="1" fill="#9A9A9A"/><rect x="4" y="6" width="1" height="1" fill="#9A9A9A"/><rect x="0" y="9" width="1" height="1" fill="#9A9A9A"/><rect x="4" y="9" width="1" height="1" fill="#9A9A9A"/><rect x="0" y="12" width="1" height="1" fill="#9A9A9A"/><rect x="4" y="12" width="1" height="1" fill="#9A9A9A"/><rect x="0" y="15" width="1" height="1" fill="#9A9A9A"/><rect x="4" y="15" width="1" height="1" fill="#9A9A9A"/></svg><svg style="position:absolute;left:822px;top:89px;" width="16" height="16" viewBox="0 0 16 16"><path d="M8 1 C4 1 4 3 4 4 V6 H9 V7 H3 C1 7 1 9 1 10 C1 12 2 13 3 13 H4.5 V11 C4.5 9.5 5.5 9 7 9 H10 C11 9 12 8 12 7 V4 C12 2 10 1 8 1 Z" fill="#3B77AE"/><path d="M8 15 C12 15 12 13 12 12 V10 H7 V9 H13 C15 9 15 7 15 6 C15 4 14 3 13 3 H11.5 V5 C11.5 6.5 10.5 7 9 7 H6 C5 7 4 8 4 9 V12 C4 14 6 15 8 15 Z" fill="#F5CF3E"/><path d="M12 13 L15 14.5 L12 16" stroke="#333" fill="none" stroke-width="0.8"/></svg><svg style="position:absolute;left:851px;top:88px;" width="5" height="18" viewBox="0 0 5 18"><rect x="0" y="0" width="1" height="1" fill="#9A9A9A"/><rect x="4" y="0" width="1" height="1" fill="#9A9A9A"/><rect x="0" y="3" width="1" height="1" fill="#9A9A9A"/><rect x="4" y="3" width="1" height="1" fill="#9A9A9A"/><rect x="0" y="6" width="1" height="1" fill="#9A9A9A"/><rect x="4" y="6" width="1" height="1" fill="#9A9A9A"/><rect x="0" y="9" width="1" height="1" fill="#9A9A9A"/><rect x="4" y="9" width="1" height="1" fill="#9A9A9A"/><rect x="0" y="12" width="1" height="1" fill="#9A9A9A"/><rect x="4" y="12" width="1" height="1" fill="#9A9A9A"/><rect x="0" y="15" width="1" height="1" fill="#9A9A9A"/><rect x="4" y="15" width="1" height="1" fill="#9A9A9A"/></svg><svg style="position:absolute;left:863px;top:89px;" width="16" height="16" viewBox="0 0 16 16"><rect x="2" y="1" width="13" height="15" fill="#5B8ACB"/><rect x="2" y="1" width="3" height="15" fill="#1E2E45"/><text x="6.5" y="12" font-size="10" font-family="Liberation Sans" fill="#fff">?</text></svg><svg style="position:absolute;left:892px;top:88px;" width="5" height="18" viewBox="0 0 5 18"><rect x="0" y="0" width="1" height="1" fill="#9A9A9A"/><rect x="4" y="0" width="1" height="1" fill="#9A9A9A"/><rect x="0" y="3" width="1" height="1" fill="#9A9A9A"/><rect x="4" y="3" width="1" height="1" fill="#9A9A9A"/><rect x="0" y="6" width="1" height="1" fill="#9A9A9A"/><rect x="4" y="6" width="1" height="1" fill="#9A9A9A"/><rect x="0" y="9" width="1" height="1" fill="#9A9A9A"/><rect x="4" y="9" width="1" height="1" fill="#9A9A9A"/><rect x="0" y="12" width="1" height="1" fill="#9A9A9A"/><rect x="4" y="12" width="1" height="1" fill="#9A9A9A"/><rect x="0" y="15" width="1" height="1" fill="#9A9A9A"/><rect x="4" y="15" width="1" height="1" fill="#9A9A9A"/></svg><div style="position:absolute;left:13px;top:115px;font-size:15px;line-height:18px;color:#000;white-space:nowrap;letter-spacing:-0.8px;line-height:18px;">Layers</div><svg style="position:absolute;left:303px;top:117px;" width="12" height="12" viewBox="0 0 12 12"><rect x="0.5" y="0.5" width="11" height="11" rx="2" fill="#F7F7F7" stroke="#6B6B6B"/><rect x="5" y="3" width="4.5" height="4" fill="none" stroke="#6B6B6B"/><rect x="2.5" y="5" width="4.5" height="4" fill="#F7F7F7" stroke="#6B6B6B"/></svg><svg style="position:absolute;left:317px;top:117px;" width="12" height="12" viewBox="0 0 12 12"><rect x="0.5" y="0.5" width="11" height="11" rx="2" fill="#F7F7F7" stroke="#6B6B6B"/><path d="M3 3 L9 9 M9 3 L3 9" stroke="#555" stroke-width="2"/></svg><svg style="position:absolute;left:17px;top:139px;" width="16" height="16" viewBox="0 0 16 16"><path d="M1 10 L6 7 L9 11 L5 15 Z" fill="#E03A3A"/><path d="M2 7 L7 4 L9 7 L4 10 Z" fill="#F2D53C"/><path d="M2 9 L6 7 L7 10 L3 12 Z" fill="#7DA9D9"/><path d="M5 9 L9 7 L11 11 L7 14 Z" fill="#D9A55A"/><path d="M9 8 L15 1" stroke="#D39A3A" stroke-width="2"/></svg><svg style="position:absolute;left:42px;top:139px;" width="16" height="16" viewBox="0 0 16 16"><path d="M1.5 7 V15.5 H9" fill="none" stroke="#7A7A7A"/><path d="M3.5 13.5 V4.5 H11.5 V13.5 Z" fill="none" stroke="#7A7A7A"/><path d="M5.5 11.5 V2.5 H13.5 V11.5" fill="none" stroke="#7A7A7A"/><path d="M8 10 V1.5 Q9 0 10 1.5 V8" fill="none" stroke="#3A5F95" stroke-width="1.2"/><rect x="9" y="9" width="7" height="7" rx="1.5" fill="#4E9A5B"/><path d="M12.5 10.5 V14.5 M10.5 12.5 H14.5" stroke="#fff" stroke-width="1.4"/></svg><svg style="position:absolute;left:67px;top:139px;" width="16" height="16" viewBox="0 0 16 16"><path d="M0 8 Q8 1 15 8 Q8 14 0 8 Z" fill="#fff" stroke="#777"/><circle cx="8" cy="7.5" r="3.5" fill="#5A8AC9"/><circle cx="8" cy="7.5" r="1.5" fill="#111"/><path d="M11 13 H16 L13.5 16 Z" fill="#444"/></svg><svg style="position:absolute;left:92px;top:139px;" width="16" height="16" viewBox="0 0 16 16"><path d="M1 2 H15 L10 8 V15 L6 12 V8 Z" fill="#5D8FCB"/><rect x="1" y="1" width="14" height="2.5" fill="#F1D54A"/></svg><svg style="position:absolute;left:117px;top:139px;" width="16" height="16" viewBox="0 0 16 16"><text x="1" y="11" font-size="12" font-family="Liberation Serif" fill="#CFCFCF">&#949;</text><rect x="8" y="9" width="7" height="6" fill="none" stroke="#DDD"/></svg><svg style="position:absolute;left:154px;top:139px;" width="16" height="16" viewBox="0 0 16 16"><rect x="1" y="2" width="8" height="12" fill="#fff" stroke="#888"/><rect x="3" y="4" width="3" height="3" fill="#F29A2E"/><rect x="3" y="10" width="3" height="3" fill="#F29A2E"/><path d="M9 1 H13 V8 H16 L11 14 L6 8 H9 Z" fill="#4B7FC0"/></svg><svg style="position:absolute;left:179px;top:139px;" width="16" height="16" viewBox="0 0 16 16"><rect x="1" y="2" width="8" height="12" fill="#fff" stroke="#888"/><rect x="3" y="7" width="3" height="3" fill="#F29A2E"/><rect x="3" y="11" width="3" height="3" fill="#F29A2E"/><path d="M9 15 H13 V8 H16 L11 1 L6 8 H9 Z" fill="#4B7FC0"/></svg><svg style="position:absolute;left:204px;top:139px;" width="16" height="16" viewBox="0 0 16 16"><path d="M2 1.5 H14 V14.5 H2 Z" fill="#fff" stroke="#777"/><rect x="9" y="11" width="7" height="4" rx="1" fill="#E03A3A"/></svg><svg style="position:absolute;left:137px;top:146px;" width="9" height="5" viewBox="0 0 9 5"><path d="M0 0 L9 0 L4.5 5 Z" fill="#B0B0B0"/></svg><div style="position:absolute;left:8px;top:163px;width:322px;height:591px;background:#fff;border:1px solid #ABABAB;"></div><div style="position:absolute;left:76px;top:163px;width:2px;height:2px;background:#333;"></div><div style="position:absolute;left:311px;top:164px;width:3px;height:15px;background:#E3E3E3;"></div><svg style="position:absolute;left:32px;top:168px;" width="14" height="14" viewBox="0 0 14 14"><rect x="0.5" y="0.5" width="13" height="13" fill="#fff" stroke="#9C9C9C"/></svg><div style="position:absolute;left:52px;top:167px;width:17px;height:16px;background:#C4B898;border:1px solid #5A5550;"></div><div style="position:absolute;left:74px;top:169px;font-size:12px;line-height:14px;color:#707070;white-space:nowrap;font-style:italic;font-weight:bold;letter-spacing:-0.3px;">Survey Areas</div><div style="position:absolute;left:9px;top:184px;width:306px;height:18px;background:linear-gradient(#47A3FF,#3596FA);border-top:1px solid #2F8FF0;border-bottom:1px solid #2F8FF0;"></div><div style="position:absolute;left:311px;top:185px;width:3px;height:16px;background:#E3E3E3;"></div><svg style="position:absolute;left:15px;top:190px;" width="9" height="5" viewBox="0 0 9 5"><path d="M0 0 H9 L4.5 4.5 Z" fill="#1A3550"/></svg><svg style="position:absolute;left:32px;top:186px;" width="14" height="14" viewBox="0 0 14 14"><rect x="0.5" y="0.5" width="13" height="13" fill="#fff" stroke="#9C9C9C"/><path d="M3.2 7.2 L5.8 10.6 L10.6 2.8" fill="none" stroke="#000" stroke-width="1.6"/></svg><svg style="position:absolute;left:53px;top:185px;" width="14" height="16" viewBox="0 0 14 16"><path d="M0.5 9 V14.5 H6" fill="none" stroke="#7F9DBB"/><rect x="2.5" y="3.5" width="8" height="9" fill="#C9E0F7" stroke="#7F9DBB"/><rect x="5.5" y="2.5" width="7" height="8" fill="#C9E0F7" stroke="#7F9DBB"/><path d="M6.5 10.5 V1.8 Q7.5 0 8.5 1.8 V9" fill="none" stroke="#3A6EA5" stroke-width="1.1"/></svg><div style="position:absolute;left:74px;top:187px;font-size:12px;line-height:14px;color:#fff;white-space:nowrap;letter-spacing:-0.55px;">Esri WMS 202006</div><div style="position:absolute;left:311px;top:203px;width:3px;height:15px;background:#E3E3E3;"></div><svg style="position:absolute;left:35px;top:210px;" width="9" height="5" viewBox="0 0 9 5"><path d="M0 0 H9 L4.5 4.5 Z" fill="#606060"/></svg><svg style="position:absolute;left:52px;top:204px;" width="14" height="14" viewBox="0 0 14 14"><rect x="0.5" y="0.5" width="13" height="13" fill="#fff" stroke="#9C9C9C"/><path d="M3.2 7.2 L5.8 10.6 L10.6 2.8" fill="none" stroke="#000" stroke-width="1.6"/></svg><svg style="position:absolute;left:74px;top:205px;" width="13" height="13" viewBox="0 0 13 13"><rect x="0.00" y="0.00" width="4.4" height="4.4" fill="#2B3B50"/><rect x="4.33" y="0.00" width="4.4" height="4.4" fill="#B4CAE2"/><rect x="8.66" y="0.00" width="4.4" height="4.4" fill="#2B3B50"/><rect x="0.00" y="4.33" width="4.4" height="4.4" fill="#B4CAE2"/><rect x="4.33" y="4.33" width="4.4" height="4.4" fill="#2B3B50"/><rect x="8.66" y="4.33" width="4.4" height="4.4" fill="#B4CAE2"/><rect x="0.00" y="8.66" width="4.4" height="4.4" fill="#2B3B50"/><rect x="4.33" y="8.66" width="4.4" height="4.4" fill="#B4CAE2"/><rect x="8.66" y="8.66" width="4.4" height="4.4" fill="#FFFFFF"/></svg><div style="position:absolute;left:94px;top:205px;font-size:12px;line-height:14px;color:#000;white-space:nowrap;font-weight:bold;letter-spacing:-0.15px;">BaselinePoint</div><svg style="position:absolute;left:76px;top:225px;" width="9" height="9" viewBox="0 0 9 9"><circle cx="4.5" cy="4.5" r="3.6" fill="#0A0A85" stroke="#000" stroke-width="0.8"/></svg><div style="position:absolute;left:311px;top:239px;width:3px;height:15px;background:#E3E3E3;"></div><svg style="position:absolute;left:35px;top:246px;" width="9" height="5" viewBox="0 0 9 5"><path d="M0 0 H9 L4.5 4.5 Z" fill="#606060"/></svg><svg style="position:absolute;left:52px;top:240px;" width="14" height="14" viewBox="0 0 14 14"><rect x="0.5" y="0.5" width="13" height="13" fill="#fff" stroke="#9C9C9C"/></svg><svg style="position:absolute;left:74px;top:241px;" width="13" height="13" viewBox="0 0 13 13"><rect x="0.00" y="0.00" width="4.4" height="4.4" fill="#2B3B50"/><rect x="4.33" y="0.00" width="4.4" height="4.4" fill="#B4CAE2"/><rect x="8.66" y="0.00" width="4.4" height="4.4" fill="#2B3B50"/><rect x="0.00" y="4.33" width="4.4" height="4.4" fill="#B4CAE2"/><rect x="4.33" y="4.33" width="4.4" height="4.4" fill="#2B3B50"/><rect x="8.66" y="4.33" width="4.4" height="4.4" fill="#B4CAE2"/><rect x="0.00" y="8.66" width="4.4" height="4.4" fill="#2B3B50"/><rect x="4.33" y="8.66" width="4.4" height="4.4" fill="#B4CAE2"/><rect x="8.66" y="8.66" width="4.4" height="4.4" fill="#FFFFFF"/></svg><div style="position:absolute;left:94px;top:241px;font-size:12px;line-height:14px;color:#707070;white-space:nowrap;font-weight:bold;font-style:italic;letter-spacing:-0.3px;">ContributingPoint</div><svg style="position:absolute;left:76px;top:261px;" width="9" height="9" viewBox="0 0 9 9"><circle cx="4.5" cy="4.5" r="3.6" fill="#0A0A85" stroke="#000" stroke-width="0.8"/></svg><div style="position:absolute;left:311px;top:275px;width:3px;height:15px;background:#E3E3E3;"></div><svg style="position:absolute;left:35px;top:282px;" width="9" height="5" viewBox="0 0 9 5"><path d="M0 0 H9 L4.5 4.5 Z" fill="#606060"/></svg><svg style="position:absolute;left:52px;top:276px;" width="14" height="14" viewBox="0 0 14 14"><rect x="0.5" y="0.5" width="13" height="13" fill="#fff" stroke="#9C9C9C"/><path d="M3.2 7.2 L5.8 10.6 L10.6 2.8" fill="none" stroke="#000" stroke-width="1.6"/></svg><svg style="position:absolute;left:74px;top:277px;" width="13" height="13" viewBox="0 0 13 13"><rect x="0.00" y="0.00" width="4.4" height="4.4" fill="#2B3B50"/><rect x="4.33" y="0.00" width="4.4" height="4.4" fill="#B4CAE2"/><rect x="8.66" y="0.00" width="4.4" height="4.4" fill="#2B3B50"/><rect x="0.00" y="4.33" width="4.4" height="4.4" fill="#B4CAE2"/><rect x="4.33" y="4.33" width="4.4" height="4.4" fill="#2B3B50"/><rect x="8.66" y="4.33" width="4.4" height="4.4" fill="#B4CAE2"/><rect x="0.00" y="8.66" width="4.4" height="4.4" fill="#2B3B50"/><rect x="4.33" y="8.66" width="4.4" height="4.4" fill="#B4CAE2"/><rect x="8.66" y="8.66" width="4.4" height="4.4" fill="#FFFFFF"/></svg><div style="position:absolute;left:94px;top:277px;font-size:12px;line-height:14px;color:#000;white-space:nowrap;font-weight:bold;letter-spacing:-0.15px;">Location</div><svg style="position:absolute;left:76px;top:297px;" width="9" height="9" viewBox="0 0 9 9"><circle cx="4.5" cy="4.5" r="3.6" fill="#8A0A12" stroke="#000" stroke-width="0.8"/></svg><div style="position:absolute;left:311px;top:311px;width:3px;height:15px;background:#E3E3E3;"></div><svg style="position:absolute;left:35px;top:318px;" width="9" height="5" viewBox="0 0 9 5"><path d="M0 0 H9 L4.5 4.5 Z" fill="#606060"/></svg><svg style="position:absolute;left:52px;top:312px;" width="14" height="14" viewBox="0 0 14 14"><rect x="0.5" y="0.5" width="13" height="13" fill="#fff" stroke="#9C9C9C"/><path d="M3.2 7.2 L5.8 10.6 L10.6 2.8" fill="none" stroke="#000" stroke-width="1.6"/></svg><svg style="position:absolute;left:74px;top:313px;" width="13" height="13" viewBox="0 0 13 13"><rect x="0.00" y="0.00" width="4.4" height="4.4" fill="#2B3B50"/><rect x="4.33" y="0.00" width="4.4" height="4.4" fill="#B4CAE2"/><rect x="8.66" y="0.00" width="4.4" height="4.4" fill="#2B3B50"/><rect x="0.00" y="4.33" width="4.4" height="4.4" fill="#B4CAE2"/><rect x="4.33" y="4.33" width="4.4" height="4.4" fill="#2B3B50"/><rect x="8.66" y="4.33" width="4.4" height="4.4" fill="#B4CAE2"/><rect x="0.00" y="8.66" width="4.4" height="4.4" fill="#2B3B50"/><rect x="4.33" y="8.66" width="4.4" height="4.4" fill="#B4CAE2"/><rect x="8.66" y="8.66" width="4.4" height="4.4" fill="#FFFFFF"/></svg><div style="position:absolute;left:94px;top:313px;font-size:12px;line-height:14px;color:#000;white-space:nowrap;font-weight:bold;letter-spacing:-0.15px;">Boundary</div><div style="position:absolute;left:73px;top:336px;width:14px;height:1px;background:#12A844;"></div><div style="position:absolute;left:311px;top:347px;width:3px;height:15px;background:#E3E3E3;"></div><svg style="position:absolute;left:35px;top:354px;" width="9" height="5" viewBox="0 0 9 5"><path d="M0 0 H9 L4.5 4.5 Z" fill="#606060"/></svg><svg style="position:absolute;left:52px;top:348px;" width="14" height="14" viewBox="0 0 14 14"><rect x="0.5" y="0.5" width="13" height="13" fill="#fff" stroke="#9C9C9C"/><path d="M3.2 7.2 L5.8 10.6 L10.6 2.8" fill="none" stroke="#000" stroke-width="1.6"/></svg><svg style="position:absolute;left:74px;top:349px;" width="13" height="13" viewBox="0 0 13 13"><rect x="0.00" y="0.00" width="4.4" height="4.4" fill="#2B3B50"/><rect x="4.33" y="0.00" width="4.4" height="4.4" fill="#B4CAE2"/><rect x="8.66" y="0.00" width="4.4" height="4.4" fill="#2B3B50"/><rect x="0.00" y="4.33" width="4.4" height="4.4" fill="#B4CAE2"/><rect x="4.33" y="4.33" width="4.4" height="4.4" fill="#2B3B50"/><rect x="8.66" y="4.33" width="4.4" height="4.4" fill="#B4CAE2"/><rect x="0.00" y="8.66" width="4.4" height="4.4" fill="#2B3B50"/><rect x="4.33" y="8.66" width="4.4" height="4.4" fill="#B4CAE2"/><rect x="8.66" y="8.66" width="4.4" height="4.4" fill="#FFFFFF"/></svg><div style="position:absolute;left:94px;top:349px;font-size:12px;line-height:14px;color:#000;white-space:nowrap;font-weight:bold;letter-spacing:-0.15px;">ConstructionLine</div><div style="position:absolute;left:73px;top:372px;width:14px;height:1px;background:#8DC21F;"></div><div style="position:absolute;left:311px;top:383px;width:3px;height:15px;background:#E3E3E3;"></div><svg style="position:absolute;left:35px;top:390px;" width="9" height="5" viewBox="0 0 9 5"><path d="M0 0 H9 L4.5 4.5 Z" fill="#606060"/></svg><svg style="position:absolute;left:52px;top:384px;" width="14" height="14" viewBox="0 0 14 14"><rect x="0.5" y="0.5" width="13" height="13" fill="#fff" stroke="#9C9C9C"/><path d="M3.2 7.2 L5.8 10.6 L10.6 2.8" fill="none" stroke="#000" stroke-width="1.6"/></svg><svg style="position:absolute;left:74px;top:385px;" width="13" height="13" viewBox="0 0 13 13"><rect x="0.00" y="0.00" width="4.4" height="4.4" fill="#2B3B50"/><rect x="4.33" y="0.00" width="4.4" height="4.4" fill="#B4CAE2"/><rect x="8.66" y="0.00" width="4.4" height="4.4" fill="#2B3B50"/><rect x="0.00" y="4.33" width="4.4" height="4.4" fill="#B4CAE2"/><rect x="4.33" y="4.33" width="4.4" height="4.4" fill="#2B3B50"/><rect x="8.66" y="4.33" width="4.4" height="4.4" fill="#B4CAE2"/><rect x="0.00" y="8.66" width="4.4" height="4.4" fill="#2B3B50"/><rect x="4.33" y="8.66" width="4.4" height="4.4" fill="#B4CAE2"/><rect x="8.66" y="8.66" width="4.4" height="4.4" fill="#FFFFFF"/></svg><div style="position:absolute;left:94px;top:385px;font-size:12px;line-height:14px;color:#000;white-space:nowrap;font-weight:bold;letter-spacing:-0.15px;">Limit</div><div style="position:absolute;left:73px;top:408px;width:14px;height:1px;background:#1DB83C;"></div><div style="position:absolute;left:311px;top:419px;width:3px;height:15px;background:#E3E3E3;"></div><svg style="position:absolute;left:35px;top:426px;" width="9" height="5" viewBox="0 0 9 5"><path d="M0 0 H9 L4.5 4.5 Z" fill="#606060"/></svg><svg style="position:absolute;left:52px;top:420px;" width="14" height="14" viewBox="0 0 14 14"><rect x="0.5" y="0.5" width="13" height="13" fill="#fff" stroke="#9C9C9C"/><path d="M3.2 7.2 L5.8 10.6 L10.6 2.8" fill="none" stroke="#000" stroke-width="1.6"/></svg><svg style="position:absolute;left:74px;top:421px;" width="13" height="13" viewBox="0 0 13 13"><rect x="0.00" y="0.00" width="4.4" height="4.4" fill="#2B3B50"/><rect x="4.33" y="0.00" width="4.4" height="4.4" fill="#B4CAE2"/><rect x="8.66" y="0.00" width="4.4" height="4.4" fill="#2B3B50"/><rect x="0.00" y="4.33" width="4.4" height="4.4" fill="#B4CAE2"/><rect x="4.33" y="4.33" width="4.4" height="4.4" fill="#2B3B50"/><rect x="8.66" y="4.33" width="4.4" height="4.4" fill="#B4CAE2"/><rect x="0.00" y="8.66" width="4.4" height="4.4" fill="#2B3B50"/><rect x="4.33" y="8.66" width="4.4" height="4.4" fill="#B4CAE2"/><rect x="8.66" y="8.66" width="4.4" height="4.4" fill="#FFFFFF"/></svg><div style="position:absolute;left:94px;top:421px;font-size:12px;line-height:14px;color:#000;white-space:nowrap;font-weight:bold;letter-spacing:-0.15px;">NormalBaseline</div><div style="position:absolute;left:73px;top:444px;width:14px;height:1px;background:#B01E8C;"></div><div style="position:absolute;left:311px;top:455px;width:3px;height:15px;background:#E3E3E3;"></div><svg style="position:absolute;left:35px;top:462px;" width="9" height="5" viewBox="0 0 9 5"><path d="M0 0 H9 L4.5 4.5 Z" fill="#606060"/></svg><svg style="position:absolute;left:52px;top:456px;" width="14" height="14" viewBox="0 0 14 14"><rect x="0.5" y="0.5" width="13" height="13" fill="#fff" stroke="#9C9C9C"/><path d="M3.2 7.2 L5.8 10.6 L10.6 2.8" fill="none" stroke="#000" stroke-width="1.6"/></svg><svg style="position:absolute;left:74px;top:457px;" width="13" height="13" viewBox="0 0 13 13"><rect x="0.00" y="0.00" width="4.4" height="4.4" fill="#2B3B50"/><rect x="4.33" y="0.00" width="4.4" height="4.4" fill="#B4CAE2"/><rect x="8.66" y="0.00" width="4.4" height="4.4" fill="#2B3B50"/><rect x="0.00" y="4.33" width="4.4" height="4.4" fill="#B4CAE2"/><rect x="4.33" y="4.33" width="4.4" height="4.4" fill="#2B3B50"/><rect x="8.66" y="4.33" width="4.4" height="4.4" fill="#B4CAE2"/><rect x="0.00" y="8.66" width="4.4" height="4.4" fill="#2B3B50"/><rect x="4.33" y="8.66" width="4.4" height="4.4" fill="#B4CAE2"/><rect x="8.66" y="8.66" width="4.4" height="4.4" fill="#FFFFFF"/></svg><div style="position:absolute;left:94px;top:457px;font-size:12px;line-height:14px;color:#000;white-space:nowrap;font-weight:bold;letter-spacing:-0.15px;">OuterLimitOfTheExclusiveEconomicZone</div><div style="position:absolute;left:73px;top:480px;width:14px;height:1px;background:#2222C0;"></div><div style="position:absolute;left:311px;top:491px;width:3px;height:15px;background:#E3E3E3;"></div><svg style="position:absolute;left:35px;top:498px;" width="9" height="5" viewBox="0 0 9 5"><path d="M0 0 H9 L4.5 4.5 Z" fill="#606060"/></svg><svg style="position:absolute;left:52px;top:492px;" width="14" height="14" viewBox="0 0 14 14"><rect x="0.5" y="0.5" width="13" height="13" fill="#fff" stroke="#9C9C9C"/><path d="M3.2 7.2 L5.8 10.6 L10.6 2.8" fill="none" stroke="#000" stroke-width="1.6"/></svg><svg style="position:absolute;left:74px;top:493px;" width="13" height="13" viewBox="0 0 13 13"><rect x="0.00" y="0.00" width="4.4" height="4.4" fill="#2B3B50"/><rect x="4.33" y="0.00" width="4.4" height="4.4" fill="#B4CAE2"/><rect x="8.66" y="0.00" width="4.4" height="4.4" fill="#2B3B50"/><rect x="0.00" y="4.33" width="4.4" height="4.4" fill="#B4CAE2"/><rect x="4.33" y="4.33" width="4.4" height="4.4" fill="#2B3B50"/><rect x="8.66" y="4.33" width="4.4" height="4.4" fill="#B4CAE2"/><rect x="0.00" y="8.66" width="4.4" height="4.4" fill="#2B3B50"/><rect x="4.33" y="8.66" width="4.4" height="4.4" fill="#B4CAE2"/><rect x="8.66" y="8.66" width="4.4" height="4.4" fill="#FFFFFF"/></svg><div style="position:absolute;left:94px;top:493px;font-size:12px;line-height:14px;color:#000;white-space:nowrap;font-weight:bold;letter-spacing:-0.15px;">OuterLimitOfTheTerritorialSea</div><div style="position:absolute;left:73px;top:516px;width:14px;height:1px;background:#A09020;"></div><div style="position:absolute;left:311px;top:527px;width:3px;height:15px;background:#E3E3E3;"></div><svg style="position:absolute;left:35px;top:534px;" width="9" height="5" viewBox="0 0 9 5"><path d="M0 0 H9 L4.5 4.5 Z" fill="#606060"/></svg><svg style="position:absolute;left:52px;top:528px;" width="14" height="14" viewBox="0 0 14 14"><rect x="0.5" y="0.5" width="13" height="13" fill="#fff" stroke="#9C9C9C"/><path d="M3.2 7.2 L5.8 10.6 L10.6 2.8" fill="none" stroke="#000" stroke-width="1.6"/></svg><svg style="position:absolute;left:74px;top:529px;" width="13" height="13" viewBox="0 0 13 13"><rect x="0.00" y="0.00" width="4.4" height="4.4" fill="#2B3B50"/><rect x="4.33" y="0.00" width="4.4" height="4.4" fill="#B4CAE2"/><rect x="8.66" y="0.00" width="4.4" height="4.4" fill="#2B3B50"/><rect x="0.00" y="4.33" width="4.4" height="4.4" fill="#B4CAE2"/><rect x="4.33" y="4.33" width="4.4" height="4.4" fill="#2B3B50"/><rect x="8.66" y="4.33" width="4.4" height="4.4" fill="#B4CAE2"/><rect x="0.00" y="8.66" width="4.4" height="4.4" fill="#2B3B50"/><rect x="4.33" y="8.66" width="4.4" height="4.4" fill="#B4CAE2"/><rect x="8.66" y="8.66" width="4.4" height="4.4" fill="#FFFFFF"/></svg><div style="position:absolute;left:94px;top:529px;font-size:12px;line-height:14px;color:#000;white-space:nowrap;font-weight:bold;letter-spacing:-0.15px;">StraightBaseline</div><div style="position:absolute;left:73px;top:552px;width:14px;height:1px;background:#20A090;"></div><div style="position:absolute;left:311px;top:563px;width:3px;height:15px;background:#E3E3E3;"></div><svg style="position:absolute;left:35px;top:570px;" width="9" height="5" viewBox="0 0 9 5"><path d="M0 0 H9 L4.5 4.5 Z" fill="#606060"/></svg><svg style="position:absolute;left:52px;top:564px;" width="14" height="14" viewBox="0 0 14 14"><rect x="0.5" y="0.5" width="13" height="13" fill="#fff" stroke="#9C9C9C"/><path d="M3.2 7.2 L5.8 10.6 L10.6 2.8" fill="none" stroke="#000" stroke-width="1.6"/></svg><svg style="position:absolute;left:74px;top:565px;" width="13" height="13" viewBox="0 0 13 13"><rect x="0.00" y="0.00" width="4.4" height="4.4" fill="#2B3B50"/><rect x="4.33" y="0.00" width="4.4" height="4.4" fill="#B4CAE2"/><rect x="8.66" y="0.00" width="4.4" height="4.4" fill="#2B3B50"/><rect x="0.00" y="4.33" width="4.4" height="4.4" fill="#B4CAE2"/><rect x="4.33" y="4.33" width="4.4" height="4.4" fill="#2B3B50"/><rect x="8.66" y="4.33" width="4.4" height="4.4" fill="#B4CAE2"/><rect x="0.00" y="8.66" width="4.4" height="4.4" fill="#2B3B50"/><rect x="4.33" y="8.66" width="4.4" height="4.4" fill="#B4CAE2"/><rect x="8.66" y="8.66" width="4.4" height="4.4" fill="#FFFFFF"/></svg><div style="position:absolute;left:94px;top:565px;font-size:12px;line-height:14px;color:#000;white-space:nowrap;font-weight:bold;letter-spacing:-0.15px;">TerritorialSea</div><div style="position:absolute;left:73px;top:582px;width:14px;height:14px;background:#C6E9FB;border:1px solid #7A7A7A;"></div><div style="position:absolute;left:311px;top:599px;width:3px;height:15px;background:#E3E3E3;"></div><svg style="position:absolute;left:35px;top:606px;" width="9" height="5" viewBox="0 0 9 5"><path d="M0 0 H9 L4.5 4.5 Z" fill="#606060"/></svg><svg style="position:absolute;left:52px;top:600px;" width="14" height="14" viewBox="0 0 14 14"><rect x="0.5" y="0.5" width="13" height="13" fill="#fff" stroke="#9C9C9C"/><path d="M3.2 7.2 L5.8 10.6 L10.6 2.8" fill="none" stroke="#000" stroke-width="1.6"/></svg><svg style="position:absolute;left:74px;top:601px;" width="13" height="13" viewBox="0 0 13 13"><rect x="0.00" y="0.00" width="4.4" height="4.4" fill="#2B3B50"/><rect x="4.33" y="0.00" width="4.4" height="4.4" fill="#B4CAE2"/><rect x="8.66" y="0.00" width="4.4" height="4.4" fill="#2B3B50"/><rect x="0.00" y="4.33" width="4.4" height="4.4" fill="#B4CAE2"/><rect x="4.33" y="4.33" width="4.4" height="4.4" fill="#2B3B50"/><rect x="8.66" y="4.33" width="4.4" height="4.4" fill="#B4CAE2"/><rect x="0.00" y="8.66" width="4.4" height="4.4" fill="#2B3B50"/><rect x="4.33" y="8.66" width="4.4" height="4.4" fill="#B4CAE2"/><rect x="8.66" y="8.66" width="4.4" height="4.4" fill="#FFFFFF"/></svg><div style="position:absolute;left:94px;top:601px;font-size:12px;line-height:14px;color:#000;white-space:nowrap;font-weight:bold;letter-spacing:-0.15px;">ExclusiveEconomicZone</div><div style="position:absolute;left:73px;top:618px;width:14px;height:14px;background:#73B0F9;border:1px solid #7A7A7A;"></div><div style="position:absolute;left:311px;top:635px;width:3px;height:15px;background:#E3E3E3;"></div><svg style="position:absolute;left:35px;top:642px;" width="9" height="5" viewBox="0 0 9 5"><path d="M0 0 H9 L4.5 4.5 Z" fill="#606060"/></svg><svg style="position:absolute;left:52px;top:636px;" width="14" height="14" viewBox="0 0 14 14"><rect x="0.5" y="0.5" width="13" height="13" fill="#fff" stroke="#9C9C9C"/><path d="M3.2 7.2 L5.8 10.6 L10.6 2.8" fill="none" stroke="#000" stroke-width="1.6"/></svg><svg style="position:absolute;left:74px;top:637px;" width="13" height="13" viewBox="0 0 13 13"><rect x="0.00" y="0.00" width="4.4" height="4.4" fill="#2B3B50"/><rect x="4.33" y="0.00" width="4.4" height="4.4" fill="#B4CAE2"/><rect x="8.66" y="0.00" width="4.4" height="4.4" fill="#2B3B50"/><rect x="0.00" y="4.33" width="4.4" height="4.4" fill="#B4CAE2"/><rect x="4.33" y="4.33" width="4.4" height="4.4" fill="#2B3B50"/><rect x="8.66" y="4.33" width="4.4" height="4.4" fill="#B4CAE2"/><rect x="0.00" y="8.66" width="4.4" height="4.4" fill="#2B3B50"/><rect x="4.33" y="8.66" width="4.4" height="4.4" fill="#B4CAE2"/><rect x="8.66" y="8.66" width="4.4" height="4.4" fill="#FFFFFF"/></svg><div style="position:absolute;left:94px;top:637px;font-size:12px;line-height:14px;color:#000;white-space:nowrap;font-weight:bold;letter-spacing:-0.15px;">ContinentalShelf</div><div style="position:absolute;left:73px;top:654px;width:14px;height:14px;background:#0070F2;border:1px solid #7A7A7A;"></div><div style="position:absolute;left:311px;top:671px;width:3px;height:15px;background:#E3E3E3;"></div><svg style="position:absolute;left:35px;top:678px;" width="9" height="5" viewBox="0 0 9 5"><path d="M0 0 H9 L4.5 4.5 Z" fill="#606060"/></svg><svg style="position:absolute;left:52px;top:672px;" width="14" height="14" viewBox="0 0 14 14"><rect x="0.5" y="0.5" width="13" height="13" fill="#fff" stroke="#9C9C9C"/></svg><svg style="position:absolute;left:74px;top:673px;" width="13" height="13" viewBox="0 0 13 13"><rect x="0.00" y="0.00" width="4.4" height="4.4" fill="#2B3B50"/><rect x="4.33" y="0.00" width="4.4" height="4.4" fill="#B4CAE2"/><rect x="8.66" y="0.00" width="4.4" height="4.4" fill="#2B3B50"/><rect x="0.00" y="4.33" width="4.4" height="4.4" fill="#B4CAE2"/><rect x="4.33" y="4.33" width="4.4" height="4.4" fill="#2B3B50"/><rect x="8.66" y="4.33" width="4.4" height="4.4" fill="#B4CAE2"/><rect x="0.00" y="8.66" width="4.4" height="4.4" fill="#2B3B50"/><rect x="4.33" y="8.66" width="4.4" height="4.4" fill="#B4CAE2"/><rect x="8.66" y="8.66" width="4.4" height="4.4" fill="#FFFFFF"/></svg><div style="position:absolute;left:94px;top:673px;font-size:12px;line-height:14px;color:#707070;white-space:nowrap;font-weight:bold;font-style:italic;letter-spacing:-0.3px;">ContiguousZone</div><div style="position:absolute;left:73px;top:690px;width:14px;height:14px;background:#FAE1C3;border:1px solid #7A7A7A;"></div><div style="position:absolute;left:311px;top:707px;width:3px;height:15px;background:#E3E3E3;"></div><svg style="position:absolute;left:36px;top:711px;" width="5" height="9" viewBox="0 0 5 9"><path d="M0 0 V9 L4.5 4.5 Z" fill="#606060"/></svg><svg style="position:absolute;left:52px;top:708px;" width="14" height="14" viewBox="0 0 14 14"><rect x="0.5" y="0.5" width="13" height="13" fill="#fff" stroke="#9C9C9C"/></svg><svg style="position:absolute;left:74px;top:709px;" width="13" height="13" viewBox="0 0 13 13"><rect x="0.00" y="0.00" width="4.4" height="4.4" fill="#2B3B50"/><rect x="4.33" y="0.00" width="4.4" height="4.4" fill="#B4CAE2"/><rect x="8.66" y="0.00" width="4.4" height="4.4" fill="#2B3B50"/><rect x="0.00" y="4.33" width="4.4" height="4.4" fill="#B4CAE2"/><rect x="4.33" y="4.33" width="4.4" height="4.4" fill="#2B3B50"/><rect x="8.66" y="4.33" width="4.4" height="4.4" fill="#B4CAE2"/><rect x="0.00" y="8.66" width="4.4" height="4.4" fill="#2B3B50"/><rect x="4.33" y="8.66" width="4.4" height="4.4" fill="#B4CAE2"/><rect x="8.66" y="8.66" width="4.4" height="4.4" fill="#FFFFFF"/></svg><div style="position:absolute;left:94px;top:709px;font-size:12px;line-height:14px;color:#707070;white-space:nowrap;font-weight:bold;font-style:italic;letter-spacing:-0.3px;">Zone</div><div style="position:absolute;left:9px;top:720px;width:306px;height:19px;overflow:hidden;"><svg style="position:absolute;left:6px;top:6px;" width="5" height="9" viewBox="0 0 5 9"><path d="M0 0 V9 L4.5 4.5 Z" fill="#404040"/></svg><svg style="position:absolute;left:23px;top:6px;" width="14" height="14" viewBox="0 0 14 14"><rect x="0.5" y="0.5" width="13" height="13" fill="#fff" stroke="#9C9C9C"/></svg><svg style="position:absolute;left:44px;top:4px;" width="14" height="16" viewBox="0 0 14 16"><path d="M0.5 9 V14.5 H6" fill="none" stroke="#8A8A8A"/><rect x="2.5" y="3.5" width="8" height="9" fill="#F4F4F4" stroke="#8A8A8A"/><rect x="5.5" y="2.5" width="7" height="8" fill="#F4F4F4" stroke="#8A8A8A"/><path d="M6.5 10.5 V1.8 Q7.5 0 8.5 1.8 V9" fill="none" stroke="#3A6EA5" stroke-width="1.1"/></svg><div style="position:absolute;left:65px;top:6px;font-size:12px;line-height:14px;color:#000;white-space:nowrap;letter-spacing:-0.55px;">Esri WFS 202006</div></div><div style="position:absolute;left:311px;top:725px;width:3px;height:14px;background:#E3E3E3;"></div><div style="position:absolute;left:315px;top:163px;width:15px;height:577px;background:linear-gradient(90deg,#F4F4F4,#FBFBFB);border-left:1px solid #C8C8C8;border-right:1px solid #ABABAB;border-top:1px solid #ABABAB;"></div><div style="position:absolute;left:316px;top:177px;width:13px;height:106px;background:#E3E3E3;border-top:1px solid #C2C2C2;border-bottom:1px solid #C2C2C2;"></div><div style="position:absolute;left:316px;top:709px;width:13px;height:17px;background:#E3E3E3;border-top:1px solid #C2C2C2;border-bottom:1px solid #C2C2C2;"></div><svg style="position:absolute;left:318px;top:167px;" width="9" height="5" viewBox="0 0 9 5"><path d="M0 5 H9 L4.5 0 Z" fill="#505050"/></svg><svg style="position:absolute;left:318px;top:730px;" width="9" height="5" viewBox="0 0 9 5"><path d="M0 0 H9 L4.5 5 Z" fill="#505050"/></svg><div style="position:absolute;left:8px;top:739px;width:308px;height:15px;background:linear-gradient(#FBFBFB,#F0F0F0);border:1px solid #ABABAB;border-right:none;"></div><div style="position:absolute;left:22px;top:740px;width:1px;height:13px;background:#C8C8C8;"></div><div style="position:absolute;left:292px;top:740px;width:9px;height:13px;background:#E3E3E3;border-left:1px solid #C2C2C2;border-right:1px solid #C2C2C2;"></div><svg style="position:absolute;left:11px;top:742px;" width="5" height="9" viewBox="0 0 5 9"><path d="M5 0 V9 L0 4.5 Z" fill="#505050"/></svg><svg style="position:absolute;left:305px;top:742px;" width="5" height="9" viewBox="0 0 5 9"><path d="M0 0 V9 L5 4.5 Z" fill="#505050"/></svg><div style="position:absolute;left:315px;top:739px;width:15px;height:15px;background:#F0F0F0;border:1px solid #ABABAB;border-left:1px solid #C8C8C8;"></div><div style="position:absolute;left:8px;top:755px;width:101px;height:21px;background:#E3E3E3;border:1px solid #ACACAC;border-radius:2px 2px 0 0;"></div><div style="position:absolute;left:19px;top:759px;font-size:12px;line-height:14px;color:#000;white-space:nowrap;letter-spacing:-0.45px;">Identify Results</div><div style="position:absolute;left:108px;top:754px;width:56px;height:24px;background:#F7F7F7;border:1px solid #ACACAC;border-top:none;border-radius:0 0 3px 3px;"></div><div style="position:absolute;left:119px;top:761px;font-size:12px;line-height:14px;color:#000;white-space:nowrap;letter-spacing:-0.4px;">Layers</div><div style="position:absolute;left:12px;top:782px;width:200px;height:22px;background:#fff;border:1px solid #ADADAD;border-radius:2px;"></div><svg style="position:absolute;left:20px;top:787px;" width="14" height="14" viewBox="0 0 14 14"><circle cx="5.5" cy="5.5" r="4.2" fill="none" stroke="#8A8A8A" stroke-width="1.2"/><path d="M8.5 8.5 L12.5 12.5" stroke="#8A8A8A" stroke-width="1.4"/></svg><div style="position:absolute;left:40px;top:787px;font-size:12px;line-height:14px;color:#6D6D6D;white-space:nowrap;letter-spacing:-0.3px;">Type to locate (Ctrl+K)</div><svg style="position:absolute;left:0px;top:0px;" width="1095" height="815" viewBox="0 0 1095 815"><defs><clipPath id="mc"><rect x="337" y="114" width="749" height="664"/></clipPath></defs><g clip-path="url(#mc)"><rect x="337" y="114" width="749" height="664" fill="#fff"/><polygon points="391.0,196.0 456.0,187.8 511.0,180.0 620.0,163.0 647.3,159.6 738.8,146.4 848.0,136.2 858.7,136.2 873.0,149.5 885.0,171.0 898.0,209.5 916.0,226.0 951.0,252.6 975.0,263.0 1016.0,294.0 1048.0,327.0 1069.0,403.0 1069.0,420.0 1060.0,442.0 999.0,485.0 953.0,507.0 924.0,518.0 870.0,534.0 828.0,559.0 802.0,619.0 795.0,645.0 790.3,665.7 788.0,684.4 783.3,696.0 776.3,707.7 764.7,719.3 753.0,728.7 734.4,738.0 715.7,745.0 692.4,750.6 669.1,755.2 655.0,756.0 641.1,755.2 624.8,752.0 613.2,747.3 599.2,741.3 589.8,735.7 580.5,728.7 571.2,719.3 515.0,696.0 457.0,580.0 365.0,424.7 431.0,424.8 438.3,428.5 449.2,430.3 467.5,434.9 496.7,434.0 507.7,427.6 516.8,416.6 521.0,407.0 526.0,396.5 529.0,390.0 530.5,381.0 527.4,370.0 520.0,347.5 514.5,329.1 501.6,307.0 490.6,292.3 477.7,283.1 464.8,272.1 453.8,268.4 389.8,259.4 386.8,254.2 380.2,249.8 369.1,248.3 369.9,246.1 386.8,246.1 394.9,241.7 400.1,236.5 400.8,232.1 397.9,224.0 395.6,218.9 391.2,215.9 405.2,197.5" fill="#0070F2" stroke="#1E9A3E" stroke-width="0.9"/><polygon points="391.0,196.0 456.0,187.8 511.0,180.0 620.0,163.0 647.3,159.6 663.4,170.7 685.1,185.9 702.4,203.3 716.4,222.3 724.1,238.0 728.5,253.2 729.3,274.9 728.5,292.2 735.0,313.9 743.6,352.9 745.8,379.0 743.6,405.0 737.1,422.4 724.1,450.1 715.7,465.3 697.1,493.2 678.4,511.9 655.1,530.5 631.8,545.5 599.2,558.5 566.5,568.8 529.2,574.8 482.6,579.5 457.0,579.5 365.0,424.7 431.0,424.8 438.3,428.5 449.2,430.3 467.5,434.9 496.7,434.0 507.7,427.6 516.8,416.6 521.0,407.0 526.0,396.5 529.0,390.0 530.5,381.0 527.4,370.0 520.0,347.5 514.5,329.1 501.6,307.0 490.6,292.3 477.7,283.1 464.8,272.1 453.8,268.4 389.8,259.4 386.8,254.2 380.2,249.8 369.1,248.3 369.9,246.1 386.8,246.1 394.9,241.7 400.1,236.5 400.8,232.1 397.9,224.0 395.6,218.9 391.2,215.9 405.2,197.5" fill="#73B0F9"/><polyline points="647.3,159.6 663.4,170.7 685.1,185.9 702.4,203.3 716.4,222.3 724.1,238.0 728.5,253.2 729.3,274.9 728.5,292.2 735.0,313.9 743.6,352.9 745.8,379.0 743.6,405.0 737.1,422.4 724.1,450.1 715.7,465.3 697.1,493.2 678.4,511.9 655.1,530.5 631.8,545.5 599.2,558.5 566.5,568.8 529.2,574.8 482.6,579.5 457.0,579.5" fill="none" stroke="#1F9A48" stroke-width="1"/><polyline points="405.2,197.5 391.2,215.9 395.6,218.9 397.9,224.0 400.8,232.1 400.1,236.5 394.9,241.7 386.8,246.1 369.9,246.1 369.1,248.3 380.2,249.8 386.8,254.2 389.8,259.4 453.8,268.4 464.8,272.1 477.7,283.1 490.6,292.3 501.6,307.0 514.5,329.1 520.0,347.5 527.4,370.0 530.5,381.0 529.0,390.0 526.0,396.5 521.0,407.0 516.8,416.6 507.7,427.6 496.7,434.0 467.5,434.9 449.2,430.3 438.3,428.5 431.0,424.8" fill="none" stroke="#9A8A40" stroke-width="2.2"/><ellipse cx="491" cy="280.4" rx="15" ry="10" fill="#C6E9FB" stroke="#9A8A40" stroke-width="2.2"/><polygon points="405.2,197.5 391.2,215.9 395.6,218.9 397.9,224.0 400.8,232.1 400.1,236.5 394.9,241.7 386.8,246.1 369.9,246.1 369.1,248.3 380.2,249.8 386.8,254.2 389.8,259.4 453.8,268.4 464.8,272.1 477.7,283.1 490.6,292.3 501.6,307.0 514.5,329.1 520.0,347.5 527.4,370.0 530.5,381.0 529.0,390.0 526.0,396.5 521.0,407.0 516.8,416.6 507.7,427.6 496.7,434.0 467.5,434.9 449.2,430.3 438.3,428.5 431.0,424.8 402.3,424.7 365.8,424.7 365.8,415.9 389.0,413.6 442.0,417.0 470.7,425.8 495.0,425.8 503.9,417.0 519.3,381.6 508.3,355.1 483.3,307.7 472.3,300.2 464.4,288.2 454.5,279.0 446.5,276.3 393.4,269.7 369.9,269.0 355.1,267.5 354.4,264.5 354.4,235.8 390.5,195.3" fill="#C6E9FB" stroke="#14A03A" stroke-width="1"/><ellipse cx="491" cy="280.4" rx="15" ry="10" fill="#C6E9FB" stroke="#14A03A" stroke-width="1"/><polygon points="337.0,113.0 368.5,113.0 376.0,121.0 368.0,139.0 358.0,142.0 377.7,158.4 372.8,161.4 378.3,167.2 352.0,185.6 336.0,192.4" fill="#739E70" stroke="#3A3A3A" stroke-width="0.8"/><polygon points="336.0,202.7 366.9,194.6 371.3,196.0 386.8,195.6 381.7,205.6 369.9,221.8 362.5,230.6 353.7,235.8 336.0,257.2" fill="#739E70" stroke="#3A3A3A" stroke-width="0.8"/><polygon points="336.0,277.6 353.8,262.5 355.2,268.0 368.9,268.0 371.6,270.8 393.5,270.5 442.8,277.0 454.0,280.0 463.5,289.0 471.5,301.0 482.5,308.5 507.5,356.0 518.0,381.6 503.0,416.0 495.0,424.5 470.7,424.5 442.0,416.0 389.0,412.8 366.5,415.0 363.6,412.5 362.5,408.4 390.8,397.4 398.1,386.5 378.0,387.4 352.4,384.7 350.6,378.3 336.0,378.3" fill="#739E70" stroke="#3A3A3A" stroke-width="0.8"/><polygon points="363.4,281.7 379.8,272.1 442.8,276.9 436.0,282.4 435.3,287.2 445.6,292.0 455.2,284.5 455.2,281.0 466.1,290.6 473.0,300.2 455.2,294.7 436.0,291.3 433.3,291.3 416.8,299.5 413.4,297.5 407.2,300.9 403.1,295.4 403.1,292.0 394.9,291.3 392.2,292.7" fill="#fff" stroke="#3A3A3A" stroke-width="0.8"/><polygon points="461.9,323.1 477.4,306.5 483.0,305.0 497.0,333.0 486.0,335.0 470.7,331.9" fill="#fff" stroke="#3A3A3A" stroke-width="0.8"/><polygon points="467.4,358.4 484.0,345.2 503.9,340.7 508.3,357.3 490.6,358.4 468.5,362.8" fill="#fff" stroke="#3A3A3A" stroke-width="0.8"/><polygon points="490.6,381.6 499.5,363.9 508.3,360.6 510.5,368.4 512.7,377.2 492.8,387.1" fill="#fff" stroke="#3A3A3A" stroke-width="0.8"/><polygon points="392.6,413.0 410.9,392.0 431.9,388.3 445.6,369.1 457.5,379.2 445.6,413.0" fill="#fff" stroke="#3A3A3A" stroke-width="0.8"/><polygon points="452.0,418.0 470.7,408.1 471.9,424.7" fill="#fff" stroke="#3A3A3A" stroke-width="0.8"/><polygon points="412.7,294.7 418.2,290.0 423.7,292.7" fill="#739E70" stroke="#3A3A3A" stroke-width="0.8"/><polygon points="435.3,284.5 442.8,279.0 455.2,284.5 448.3,292.7 436.0,288.6" fill="#739E70" stroke="#3A3A3A" stroke-width="0.8"/><polyline points="390.5,195.3 354.4,235.8 354.4,264.5 355.1,267.5 369.9,269.0 393.4,269.7 446.5,276.3 454.5,279.0 464.4,288.2 472.3,300.2 483.3,307.7 508.3,355.1 519.3,381.6 503.9,417.0 495.0,425.8 470.7,425.8 442.0,417.0 389.0,413.6 365.8,415.9" fill="none" stroke="#14A03A" stroke-width="1.3"/><polyline points="391.0,196.0 456.0,187.8 511.0,180.0 620.0,163.0 647.3,159.6 738.8,146.4 848.0,136.2 858.7,136.2" fill="none" stroke="#8FB03A" stroke-width="1.3"/><polyline points="365,424 457,580" fill="none" stroke="#8FB03A" stroke-width="1.1"/><polyline points="511.2,180 526.6,216 553,222.4 716.4,222.5" fill="none" stroke="#14A03A" stroke-width="1.6"/><circle cx="390.5" cy="195" r="3.3" fill="#8A0A18" stroke="#000" stroke-width="0.8"/><circle cx="517.1" cy="383.8" r="3.3" fill="#8A0A18" stroke="#000" stroke-width="0.8"/><circle cx="492.8" cy="426.2" r="3.3" fill="#8A0A18" stroke="#000" stroke-width="0.8"/><circle cx="473" cy="425.8" r="3.3" fill="#8A0A18" stroke="#000" stroke-width="0.8"/><circle cx="511.2" cy="180" r="3.3" fill="#8A0A18" stroke="#000" stroke-width="0.8"/><circle cx="716.4" cy="222.5" r="3.3" fill="#8A0A18" stroke="#000" stroke-width="0.8"/><circle cx="709.5" cy="412.5" r="3.3" fill="#8A0A18" stroke="#000" stroke-width="0.8"/><circle cx="717" cy="412.5" r="3.3" fill="#8A0A18" stroke="#000" stroke-width="0.8"/><circle cx="712" cy="417" r="3.3" fill="#8A0A18" stroke="#000" stroke-width="0.8"/><circle cx="720" cy="416" r="3.3" fill="#8A0A18" stroke="#000" stroke-width="0.8"/><circle cx="711" cy="423.5" r="3.3" fill="#8A0A18" stroke="#000" stroke-width="0.8"/><circle cx="718.5" cy="421" r="3.3" fill="#8A0A18" stroke="#000" stroke-width="0.8"/><circle cx="725" cy="420" r="3.3" fill="#8A0A18" stroke="#000" stroke-width="0.8"/><circle cx="725" cy="426" r="3.3" fill="#8A0A18" stroke="#000" stroke-width="0.8"/><circle cx="719" cy="428" r="3.3" fill="#8A0A18" stroke="#000" stroke-width="0.8"/><circle cx="711" cy="429" r="3.3" fill="#8A0A18" stroke="#000" stroke-width="0.8"/><circle cx="717" cy="432" r="3.3" fill="#8A0A18" stroke="#000" stroke-width="0.8"/><circle cx="727" cy="431" r="3.3" fill="#8A0A18" stroke="#000" stroke-width="0.8"/><circle cx="722" cy="433" r="3.3" fill="#8A0A18" stroke="#000" stroke-width="0.8"/><circle cx="710" cy="433" r="3.3" fill="#8A0A18" stroke="#000" stroke-width="0.8"/><circle cx="383.9" cy="205.3" r="3.6" fill="#0A0A85" stroke="#000" stroke-width="0.9"/><circle cx="375.5" cy="214" r="3.6" fill="#0A0A85" stroke="#000" stroke-width="0.9"/><circle cx="373.6" cy="218.1" r="3.6" fill="#0A0A85" stroke="#000" stroke-width="0.9"/><circle cx="368.4" cy="226.2" r="3.6" fill="#0A0A85" stroke="#000" stroke-width="0.9"/><circle cx="365.5" cy="229.6" r="3.6" fill="#0A0A85" stroke="#000" stroke-width="0.9"/><circle cx="355.1" cy="239.5" r="3.6" fill="#0A0A85" stroke="#000" stroke-width="0.9"/><circle cx="382.4" cy="223.3" r="3.6" fill="#0A0A85" stroke="#000" stroke-width="0.9"/><circle cx="385.3" cy="231.4" r="3.6" fill="#0A0A85" stroke="#000" stroke-width="0.9"/><circle cx="383.4" cy="234.8" r="3.6" fill="#0A0A85" stroke="#000" stroke-width="0.9"/><circle cx="379.4" cy="238.3" r="3.6" fill="#0A0A85" stroke="#000" stroke-width="0.9"/><circle cx="372.5" cy="256.9" r="3.6" fill="#0A0A85" stroke="#000" stroke-width="0.9"/><circle cx="374.6" cy="260.1" r="3.6" fill="#0A0A85" stroke="#000" stroke-width="0.9"/><circle cx="355.1" cy="261.6" r="3.6" fill="#0A0A85" stroke="#000" stroke-width="0.9"/><circle cx="363.2" cy="267.2" r="3.6" fill="#0A0A85" stroke="#000" stroke-width="0.9"/><circle cx="365.5" cy="268.7" r="3.6" fill="#0A0A85" stroke="#000" stroke-width="0.9"/><circle cx="382.8" cy="269.2" r="3.6" fill="#0A0A85" stroke="#000" stroke-width="0.9"/><circle cx="389.8" cy="269.2" r="3.6" fill="#0A0A85" stroke="#000" stroke-width="0.9"/><circle cx="446.3" cy="276.9" r="3.6" fill="#0A0A85" stroke="#000" stroke-width="0.9"/><circle cx="449.7" cy="277.6" r="3.6" fill="#0A0A85" stroke="#000" stroke-width="0.9"/><circle cx="454.5" cy="279" r="3.6" fill="#0A0A85" stroke="#000" stroke-width="0.9"/><circle cx="464.4" cy="288.2" r="3.6" fill="#0A0A85" stroke="#000" stroke-width="0.9"/><circle cx="472.3" cy="300.2" r="3.6" fill="#0A0A85" stroke="#000" stroke-width="0.9"/><circle cx="479.8" cy="304.3" r="3.6" fill="#0A0A85" stroke="#000" stroke-width="0.9"/><circle cx="483.3" cy="307.7" r="3.6" fill="#0A0A85" stroke="#000" stroke-width="0.9"/><circle cx="490.9" cy="280.2" r="3.6" fill="#0A0A85" stroke="#000" stroke-width="0.9"/><circle cx="495" cy="329" r="3.6" fill="#0A0A85" stroke="#000" stroke-width="0.9"/><circle cx="499.5" cy="333" r="3.6" fill="#0A0A85" stroke="#000" stroke-width="0.9"/><circle cx="499.9" cy="337" r="3.6" fill="#0A0A85" stroke="#000" stroke-width="0.9"/><circle cx="508.3" cy="356.2" r="3.6" fill="#0A0A85" stroke="#000" stroke-width="0.9"/><circle cx="509.4" cy="354" r="3.6" fill="#0A0A85" stroke="#000" stroke-width="0.9"/><circle cx="510.5" cy="370.6" r="3.6" fill="#0A0A85" stroke="#000" stroke-width="0.9"/><circle cx="513.8" cy="373.9" r="3.6" fill="#0A0A85" stroke="#000" stroke-width="0.9"/><circle cx="516" cy="378.3" r="3.6" fill="#0A0A85" stroke="#000" stroke-width="0.9"/><circle cx="516" cy="388.2" r="3.6" fill="#0A0A85" stroke="#000" stroke-width="0.9"/><circle cx="511.6" cy="394.9" r="3.6" fill="#0A0A85" stroke="#000" stroke-width="0.9"/><circle cx="510.1" cy="398.2" r="3.6" fill="#0A0A85" stroke="#000" stroke-width="0.9"/><circle cx="508.3" cy="401.5" r="3.6" fill="#0A0A85" stroke="#000" stroke-width="0.9"/><circle cx="506.5" cy="405.9" r="3.6" fill="#0A0A85" stroke="#000" stroke-width="0.9"/><circle cx="505" cy="410.3" r="3.6" fill="#0A0A85" stroke="#000" stroke-width="0.9"/><circle cx="502.8" cy="418.1" r="3.6" fill="#0A0A85" stroke="#000" stroke-width="0.9"/><circle cx="496.2" cy="424.7" r="3.6" fill="#0A0A85" stroke="#000" stroke-width="0.9"/><circle cx="448.7" cy="419.2" r="3.6" fill="#0A0A85" stroke="#000" stroke-width="0.9"/><circle cx="444.2" cy="417" r="3.6" fill="#0A0A85" stroke="#000" stroke-width="0.9"/><circle cx="443.1" cy="422.5" r="3.6" fill="#0A0A85" stroke="#000" stroke-width="0.9"/><circle cx="389" cy="414.3" r="3.6" fill="#0A0A85" stroke="#000" stroke-width="0.9"/><circle cx="378" cy="415.4" r="3.6" fill="#0A0A85" stroke="#000" stroke-width="0.9"/><circle cx="372.4" cy="416.3" r="3.6" fill="#0A0A85" stroke="#000" stroke-width="0.9"/><circle cx="368" cy="416.3" r="3.6" fill="#0A0A85" stroke="#000" stroke-width="0.9"/><circle cx="473.5" cy="424.8" r="3.6" fill="#0A0A85" stroke="#000" stroke-width="0.9"/><circle cx="470.5" cy="425.5" r="3.6" fill="#0A0A85" stroke="#000" stroke-width="0.9"/><circle cx="492.5" cy="424.8" r="3.6" fill="#0A0A85" stroke="#000" stroke-width="0.9"/><circle cx="517.5" cy="381.5" r="3.6" fill="#0A0A85" stroke="#000" stroke-width="0.9"/></g><rect x="336.5" y="113.5" width="750" height="665" fill="none" stroke="#A0A0A0" stroke-width="1"/></svg><div style="position:absolute;left:333px;top:439px;width:1px;height:1px;background:#A0A0A0;"></div><div style="position:absolute;left:333px;top:442px;width:1px;height:1px;background:#A0A0A0;"></div><div style="position:absolute;left:333px;top:445px;width:1px;height:1px;background:#A0A0A0;"></div><div style="position:absolute;left:333px;top:448px;width:1px;height:1px;background:#A0A0A0;"></div><div style="position:absolute;left:333px;top:451px;width:1px;height:1px;background:#A0A0A0;"></div><div style="position:absolute;left:333px;top:454px;width:1px;height:1px;background:#A0A0A0;"></div><div style="position:absolute;left:312px;top:787px;font-size:12px;line-height:14px;color:#000;white-space:nowrap;letter-spacing:-0.6px;">Coordinate</div><div style="position:absolute;left:368px;top:782px;width:91px;height:22px;background:#fff;border:1px solid #ADADAD;border-radius:2px;"></div><div style="position:absolute;left:381px;top:787px;font-size:12px;line-height:14px;color:#000;white-space:nowrap;letter-spacing:-0.2px;">-56.15,48.54</div><svg style="position:absolute;left:462px;top:783px;" width="20" height="20" viewBox="0 0 20 20"><g transform="rotate(-35 10 10)"><ellipse cx="10" cy="10" rx="5.6" ry="7.6" fill="#fff" stroke="#111" stroke-width="1.6"/><path d="M4.8 8 H15.2" stroke="#111" stroke-width="1.4"/><path d="M10 2.5 V8" stroke="#111" stroke-width="1.2"/><path d="M7 4.5 V7.5 M13 4.5 V7.5" stroke="#111" stroke-width="1.1"/><circle cx="10" cy="12.5" r="1.6" fill="none" stroke="#111" stroke-width="1.1"/></g><path d="M15.5 4 L17.5 2.5" stroke="#333" stroke-width="1"/><path d="M2 13.5 L4 13" stroke="#333" stroke-width="1"/></svg><div style="position:absolute;left:492px;top:787px;font-size:12px;line-height:14px;color:#000;white-space:nowrap;letter-spacing:-0.4px;">Scale</div><div style="position:absolute;left:521px;top:782px;width:93px;height:22px;background:#fff;border:1px solid #ADADAD;border-radius:2px;"></div><div style="position:absolute;left:593px;top:783px;width:1px;height:20px;background:#D5D5D5;"></div><svg style="position:absolute;left:599px;top:791px;" width="9" height="5" viewBox="0 0 9 5"><path d="M0 0 L9 0 L4.5 5 Z" fill="#555"/></svg><div style="position:absolute;left:526px;top:787px;font-size:12px;line-height:14px;color:#000;white-space:nowrap;letter-spacing:-0.4px;">1:4415325</div><svg style="position:absolute;left:625px;top:785px;" width="14" height="16" viewBox="0 0 14 16"><path d="M3.5 7 V4.5 A3.5 3.5 0 0 1 10.5 4.5 V7" fill="none" stroke="#555" stroke-width="1.8"/><rect x="1" y="7" width="12" height="9" rx="1.5" fill="#555"/></svg><div style="position:absolute;left:646px;top:787px;font-size:12px;line-height:14px;color:#000;white-space:nowrap;letter-spacing:-0.6px;">Magnifier</div><div style="position:absolute;left:694px;top:782px;width:87px;height:22px;background:#fff;border:1px solid #ADADAD;border-radius:2px;"></div><div style="position:absolute;left:767px;top:783px;width:1px;height:20px;background:#D5D5D5;"></div><svg style="position:absolute;left:770px;top:786px;" width="8" height="14" viewBox="0 0 8 14"><path d="M0 5 L4 0 L8 5 Z M0 9 L4 14 L8 9 Z" fill="#555"/></svg><div style="position:absolute;left:697px;top:787px;font-size:12px;line-height:14px;color:#000;white-space:nowrap;letter-spacing:-0.3px;">100%</div><div style="position:absolute;left:790px;top:787px;font-size:12px;line-height:14px;color:#000;white-space:nowrap;letter-spacing:-0.5px;">Rotation</div><div style="position:absolute;left:841px;top:782px;width:84px;height:22px;background:#fff;border:1px solid #ADADAD;border-radius:2px;"></div><div style="position:absolute;left:911px;top:783px;width:1px;height:20px;background:#D5D5D5;"></div><svg style="position:absolute;left:914px;top:786px;" width="8" height="14" viewBox="0 0 8 14"><path d="M0 5 L4 0 L8 5 Z M0 9 L4 14 L8 9 Z" fill="#555"/></svg><div style="position:absolute;left:845px;top:787px;font-size:12px;line-height:14px;color:#000;white-space:nowrap;letter-spacing:-0.3px;">0.0 °</div><svg style="position:absolute;left:931px;top:786px;" width="14" height="14" viewBox="0 0 14 14"><rect x="0.5" y="0.5" width="13" height="13" fill="#fff" stroke="#9C9C9C"/><path d="M3.2 7.2 L5.8 10.6 L10.6 2.8" fill="none" stroke="#000" stroke-width="1.6"/></svg><div style="position:absolute;left:949px;top:787px;font-size:12px;line-height:14px;color:#000;white-space:nowrap;letter-spacing:-0.5px;">Render</div><svg style="position:absolute;left:1002px;top:784px;" width="16" height="16" viewBox="0 0 16 16"><path d="M2 2 L14 14 M14 2 L2 14" stroke="#5C5C5C" stroke-width="2.4"/><circle cx="8" cy="8" r="4" fill="#9A9A9A" opacity="0.4"/></svg><svg style="position:absolute;left:1040px;top:785px;" width="18" height="16" viewBox="0 0 18 16"><ellipse cx="8.5" cy="6.5" rx="8" ry="6" fill="#646464"/><path d="M9 11 L15 15 L12 10 Z" fill="#646464"/><circle cx="4.5" cy="6.5" r="1.4" fill="#fff"/><circle cx="8.5" cy="6.5" r="1.4" fill="#fff"/><circle cx="12.5" cy="6.5" r="1.4" fill="#fff"/></svg><svg style="position:absolute;left:1075px;top:795px;" width="11" height="11" viewBox="0 0 11 11"><rect x="9" y="0" width="1.2" height="1.2" fill="#B0B0B0"/><rect x="6" y="3" width="1.2" height="1.2" fill="#B0B0B0"/><rect x="9" y="3" width="1.2" height="1.2" fill="#B0B0B0"/><rect x="3" y="6" width="1.2" height="1.2" fill="#B0B0B0"/><rect x="6" y="6" width="1.2" height="1.2" fill="#B0B0B0"/><rect x="9" y="6" width="1.2" height="1.2" fill="#B0B0B0"/><rect x="0" y="9" width="1.2" height="1.2" fill="#B0B0B0"/><rect x="3" y="9" width="1.2" height="1.2" fill="#B0B0B0"/><rect x="6" y="9" width="1.2" height="1.2" fill="#B0B0B0"/><rect x="9" y="9" width="1.2" height="1.2" fill="#B0B0B0"/></svg>
</body></html>
